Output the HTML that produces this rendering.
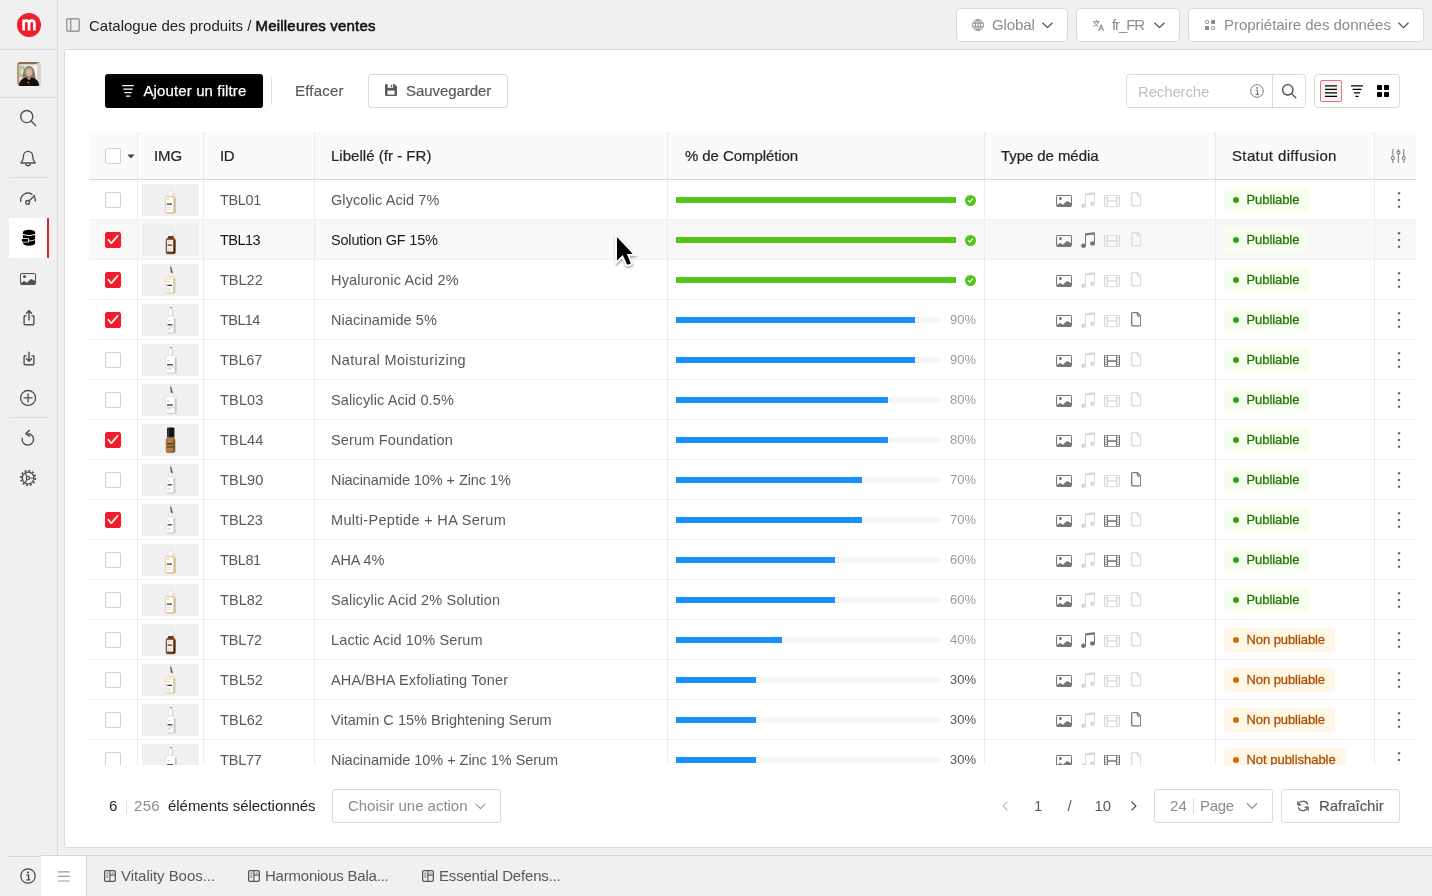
<!DOCTYPE html>
<html lang="fr">
<head>
<meta charset="utf-8">
<title>Catalogue des produits / Meilleures ventes</title>
<style>
*{box-sizing:border-box;margin:0;padding:0}
html,body{width:1432px;height:896px;overflow:hidden}
body{background:#f0f0f0;font-family:"Liberation Sans",sans-serif;font-size:15px;color:#1f1f1f;position:relative}
#root{position:absolute;left:0;top:0;width:1432px;height:896px;will-change:transform}
.abs{position:absolute}
svg{display:block}
/* sidebar */
#side{position:absolute;left:0;top:0;width:58px;height:855px;border-right:1px solid #dcdcdc}
#side .hl{position:absolute;left:0;width:57px;height:1px;background:#dcdcdc}
#side .sl{position:absolute;left:8.5px;width:40px;height:1px;background:#dcdcdc}
#logo{position:absolute;left:16.5px;top:12.800px;width:24.200px;height:24.200px;border-radius:50%;background:#f01d2c;color:#fff}
#avatar{position:absolute;left:16.5px;top:62px;width:24px;height:24px;border-radius:4px;overflow:hidden;background:#c9b49a}
.si{position:absolute;left:8px;width:40px;height:40px;color:#505050}
.si svg{position:absolute;left:50%;top:50%;transform:translate(-50%,-50%)}
.si.act{background:#fff;color:#000;border-right:2px solid #f01d2c;width:40px;left:8.5px}
/* top bar */
#crumb{position:absolute;left:89px;top:17px;height:18px;line-height:18px;font-size:15px;white-space:nowrap;color:#1f1f1f;letter-spacing:-0.01px}
#crumb b{font-weight:400;-webkit-text-stroke:.55px #111;letter-spacing:0.2px;color:#111}
.tbtn{position:absolute;top:8px;height:34px;background:#fff;border:1px solid #d9d9d9;border-radius:4px;color:#8c8c8c;font-size:15px;line-height:32px;white-space:nowrap}
.tbtn span{position:absolute;top:0}
.tbtn svg{position:absolute}
/* panel */
#panel{position:absolute;left:64px;top:49px;width:1380px;height:799px;background:#fff;border:1px solid #d9d9d9;border-radius:2.500px}
/* toolbar */
#addf{position:absolute;left:105px;top:74px;width:158px;height:34px;border-radius:3px;background:#000;color:#fff;font-size:15px;line-height:34px}
#addf span{position:absolute;left:38.500px;top:0;white-space:nowrap;letter-spacing:0.119px;-webkit-text-stroke:.25px #fff}
#vsep{position:absolute;left:271px;top:77px;width:1px;height:28px;background:#e0e0e0}
#eff{position:absolute;left:295px;top:74px;height:34px;line-height:34px;color:#595959;font-size:15px;-webkit-text-stroke:.2px #595959;letter-spacing:0.2px}
#sauv{position:absolute;left:368px;top:74px;width:140px;height:34px;border:1px solid #d9d9d9;border-radius:3px;background:#fff;color:#595959;font-size:15px;line-height:32px}
#sauv span{position:absolute;left:37px;top:0;-webkit-text-stroke:.2px #595959;letter-spacing:-0.07px}
#search{position:absolute;left:1126px;top:74px;width:180px;height:34px;border:1px solid #d9d9d9;border-radius:4px;background:#fff}
#search .ph{position:absolute;left:11px;top:0;line-height:33px;color:#bfbfbf;font-size:15px;letter-spacing:-0.15px}
#search .dv{position:absolute;left:145px;top:0;width:1px;height:32px;background:#d9d9d9}
#views{position:absolute;left:1314px;top:74px;width:86px;height:34px;border:1px solid #d9d9d9;border-radius:4px;background:#fff}
#views .sel{position:absolute;left:5px;top:5px;width:22px;height:22px;border:1px solid #f26b75;border-radius:2px;background:#f5f5f5}
/* table */
#tbl{position:absolute;left:89px;top:132px;width:1327px;height:633px;overflow:hidden;background:#fff}
#thead{position:absolute;left:0;top:0;width:1327px;height:48px;background:#fafafa;border-bottom:1px solid #d9d9d9}
.hc{position:absolute;top:0;height:47px;line-height:48px;font-size:15px;color:#262626;font-weight:400;border-left:1px solid #ececec;white-space:nowrap;-webkit-text-stroke:.22px #262626}
.row{position:absolute;left:0;width:1327px;height:40px;border-bottom:1px solid #f0f0f0;font-size:14.5px;color:#595959}
.row.hov{background:#f8f8f8;color:#1a1a1a}
.c{position:absolute;top:0;height:39px;line-height:40px;border-left:1px solid #ececec;white-space:nowrap}
.c0{left:0;width:48px;border-left:none}
.c1{left:48px;width:66px}
.c2{left:114px;width:111px;padding-left:16px}
.c3{left:225px;width:353px;padding-left:16px}
.c4{left:578px;width:317px}
.c5{left:895px;width:231px}
.c6{left:1126px;width:159px}
.c7{left:1285px;width:42px}
.cb{position:absolute;left:16px;top:12px;width:16px;height:16px;border:1px solid #d0d0d0;border-radius:2px;background:#fff}
.cb.on{background:#f01d2c;border-color:#f01d2c}
.cb.on svg{position:absolute;left:-1px;top:-1px}
.th{position:absolute;left:4px;top:4px;width:57px;height:32px;background:#f0f0f0}
.th .bt{position:absolute;left:0;top:0}
.trk{position:absolute;left:8px;top:17px;width:265px;height:6px;background:#f5f5f5}
.trk.full{width:280px}
.trk i{position:absolute;left:0;top:0;height:6px;background:#1890ff}
.trk.full i{background:#52c41a}
.ok{position:absolute;left:296.5px;top:14.5px}
.pc{position:absolute;right:8px;top:0;font-size:13px;color:#9a9a9a;line-height:40px}
.pc.dk{color:#555}
.mi{position:absolute;top:12px;color:#d9d9d9}
.mi.on{color:#757575}
.m0{left:71px;top:12.700px}.m1{left:95px;top:10.800px}.m2{left:119px;top:12.700px}.m3{left:145.900px;top:12px}
.bdg{position:absolute;left:8px;top:8px;height:24px;line-height:24px;border-radius:4px;font-size:13px;padding:0 10px 0 22.500px;font-weight:400;-webkit-text-stroke:.3px currentColor}
.bdg b{position:absolute;left:8.800px;top:8.800px;width:6.400px;height:6.400px;border-radius:50%}
.bdg.g{background:#f6ffed;color:#237804}.bdg.g b{background:#389e0d}
.bdg.o{background:#fff7e6;color:#ad4e00}.bdg.o b{background:#d46b08}
.dots{position:absolute;left:21.900px;top:11px;fill:#6a6a6a}
/* footer */
#foot{position:absolute;left:65px;top:765px;width:1367px;height:81px;background:#fff}
.ft{position:absolute;top:797px;height:18px;line-height:18px;font-size:15px;white-space:nowrap}
#act{position:absolute;left:332px;top:789px;width:169px;height:34px;border:1px solid #d9d9d9;border-radius:3px;color:#8c8c8c;font-size:15px;line-height:32px;background:#fff}
#act span{position:absolute;left:15px;top:0}
#pgsz{position:absolute;left:1154px;top:789px;width:119px;height:34px;border:1px solid #d9d9d9;border-radius:3px;color:#8c8c8c;font-size:15px;line-height:32px;background:#fff}
#refr{position:absolute;left:1281px;top:789px;width:119px;height:34px;border:1px solid #d9d9d9;border-radius:3px;color:#595959;font-size:15px;line-height:32px;background:#fff}
/* bottom bar */
#bbar{position:absolute;left:41px;top:855px;width:1391px;height:41px;background:#f0f0f0;border-top:1px solid #d9d9d9}
#burger{position:absolute;left:41px;top:856px;width:46px;height:40px;background:#fff;border-right:1px solid #d4d4d4}
.tab{position:absolute;top:867px;height:18px;line-height:18px;font-size:15px;color:#595959;white-space:nowrap}
</style>
</head>
<body>
<div id="root">
<!-- sidebar -->
<div id="side">
  <div id="logo"><svg width="24.200" height="24.200" viewBox="0 0 24.200 24.200"><path d="M6.650 17.500V6.500M6.650 10.400a2.700 2.700 0 0 1 5.400 0V17.500M12.050 10.400a2.700 2.700 0 0 1 5.400 0V17.500" fill="none" stroke="#fff" stroke-width="2.700" stroke-linecap="butt"/></svg></div>
  <div class="hl" style="top:49px"></div>
  <div id="avatar"><svg width="24" height="24" viewBox="0 0 24 24"><defs><filter id="avb" x="-10%" y="-10%" width="120%" height="120%"><feGaussianBlur stdDeviation=".55"/></filter></defs><rect width="24" height="24" fill="#ece7de"/><g filter="url(#avb)"><rect x="-2" y="-2" width="28" height="4.200" fill="#8a6f52"/><rect x="-1" y="2" width="3.500" height="24" fill="#b39c82"/><rect x="2.500" y="4" width="5" height="11" fill="#b5c486"/><rect x="3.500" y="7" width="3" height="5" fill="#dfe8b8"/><rect x="20" y="1" width="5" height="24" fill="#d9d4cf"/><rect x="17" y="3" width="3" height="12" fill="#f7f5f1"/><path d="M5.500 20C5.500 9 7.500 4 12 4C16.500 4 18.500 9 18.500 20Z" fill="#857a70"/><ellipse cx="12" cy="10" rx="3.400" ry="4.200" fill="#d9b29c"/><path d="M9 8.200C9.500 5.600 14.500 5.600 15 8.200C14 6.800 10 6.800 9 8.200Z" fill="#a9a39b"/><path d="M1.500 25C2 18 6 16 9.500 15.500L12 17.500L14.500 15.500C18 16 22 18 22.500 25Z" fill="#14110e"/><path d="M10.500 14.500h3v2.500l-1.500 1.200-1.500-1.200Z" fill="#b98a70"/><circle cx="11.300" cy="20.500" r=".7" fill="#d9b430"/><circle cx="12.800" cy="21.800" r=".6" fill="#c0392b"/></g></svg></div>
  <div class="hl" style="top:97px"></div>
  <div class="si" style="top:98px"><svg width="20" height="20" viewBox="0 0 20 20"><circle cx="8.750" cy="8.600" r="6.050" fill="none" stroke="currentColor" stroke-width="1.400"/><path d="M13.200 13.100 17.600 17.500" stroke="currentColor" stroke-width="1.400" stroke-linecap="round"/></svg></div>
  <div class="si" style="top:138px"><svg width="18" height="18" viewBox="0 0 18 18"><path d="M2 14 C4 11.600 4.500 9.600 4.500 6.900 A4.600 4.600 0 0 1 13.700 6.900 C13.700 9.600 14.200 11.600 16.200 14 Z" fill="none" stroke="currentColor" stroke-width="1.350" stroke-linejoin="round"/><path d="M6.900 14.500 A2.200 2.200 0 0 0 11.300 14.500" fill="none" stroke="currentColor" stroke-width="1.300"/></svg></div>
  <div class="sl" style="top:177px"></div>
  <div class="si" style="top:178px"><svg width="18" height="18" viewBox="0 0 18 18"><path d="M1.700 12.400A7.300 7.300 0 0 1 13 5.400M15.600 8.400A7.300 7.300 0 0 1 16.300 12" fill="none" stroke="currentColor" stroke-width="1.400" stroke-linecap="round"/><circle cx="8.600" cy="13.400" r="1.900" fill="none" stroke="currentColor" stroke-width="1.400"/><path d="M10 12 15.600 6.600" stroke="currentColor" stroke-width="1.400" stroke-linecap="round"/></svg></div>
  <div class="si act" style="top:218px"><svg style="margin-left:1px" width="16" height="18" viewBox="0 0 16 18"><path d="M1.900 3.400V14.100A6.100 2.700 0 0 0 14.100 14.100V3.400Z" fill="currentColor"/><ellipse cx="8" cy="3.400" rx="6.100" ry="2.650" fill="currentColor"/><path d="M1.300 5.400Q8 7.900 14.700 5.400" fill="none" stroke="#fff" stroke-width="1"/><path d="M8.600 11.900Q12 11.800 14.500 10.500" fill="none" stroke="#fff" stroke-width=".85"/><rect x="-1" y="9.300" width="9.200" height="4.300" rx="1.300" fill="#fff"/><rect x=".9" y="10.100" width="6.200" height="2.700" rx=".5" fill="currentColor"/></svg></div>
  <div class="si" style="top:258px"><svg style="margin-top:.6px" width="16" height="16" viewBox="0 0 16 16"><path fill="currentColor" d="M6 5.500a1.500 1.500 0 1 1-3 0 1.500 1.500 0 0 1 3 0z"/><path fill="currentColor" d="M2 2a2 2 0 0 0-2 2v8a2 2 0 0 0 2 2h12a2 2 0 0 0 2-2V4a2 2 0 0 0-2-2H2zm12 1a1 1 0 0 1 1 1v6l-3.775-1.947a.5.5 0 0 0-.577.093l-3.710 3.710-2.660-1.772a.5.5 0 0 0-.630.062L1 12V4a1 1 0 0 1 1-1h12z"/></svg></div>
  <div class="si" style="top:298px"><svg style="margin-left:1px" width="16" height="18" viewBox="0 0 16 18"><path d="M5.400 6.800H4.100a1 1 0 0 0-1 1v7a1 1 0 0 0 1 1h7.800a1 1 0 0 0 1-1v-7a1 1 0 0 0-1-1h-1.300" fill="none" stroke="currentColor" stroke-width="1.400"/><path d="M8 11V1.800M5.500 4.200 8 1.600l2.500 2.600" fill="none" stroke="currentColor" stroke-width="1.400" stroke-linecap="round" stroke-linejoin="round"/></svg></div>
  <div class="si" style="top:338px"><svg style="margin-left:1px" width="16" height="18" viewBox="0 0 16 18"><path d="M5.400 6.800H4.100a1 1 0 0 0-1 1v7a1 1 0 0 0 1 1h7.800a1 1 0 0 0 1-1v-7a1 1 0 0 0-1-1h-1.300" fill="none" stroke="currentColor" stroke-width="1.400"/><path d="M8 3.100V12.100M5.500 9.700 8 12.300l2.500-2.600" fill="none" stroke="currentColor" stroke-width="1.400" stroke-linecap="round" stroke-linejoin="round"/></svg></div>
  <div class="si" style="top:378px"><svg width="18" height="18" viewBox="0 0 18 18"><circle cx="9.100" cy="8.900" r="7.450" fill="none" stroke="currentColor" stroke-width="1.350"/><path d="M9.100 4.900v8M5.100 8.900h8" stroke="currentColor" stroke-width="1.350" stroke-linecap="round"/></svg></div>
  <div class="sl" style="top:417px"></div>
  <div class="si" style="top:418px"><svg width="18" height="18" viewBox="0 0 18 18"><path d="M8.900 4.700A5.700 5.700 0 1 1 3.250 9.400" fill="none" stroke="currentColor" stroke-width="1.400" stroke-linecap="round"/><path d="M10.400 1.400 6.700 4.600 10.400 7.300" fill="none" stroke="currentColor" stroke-width="1.400" stroke-linecap="round" stroke-linejoin="round"/></svg></div>
  <div class="si" style="top:458px"><svg width="18" height="18" viewBox="0 0 18 18"><circle cx="9.100" cy="9" r="5.800" fill="none" stroke="currentColor" stroke-width="1.300"/><circle cx="9.100" cy="9" r="7.200" fill="none" stroke="currentColor" stroke-width="1.900" stroke-dasharray="1.900 1.870"/><circle cx="8.900" cy="9" r="1.600" fill="none" stroke="currentColor" stroke-width="1.200"/><path d="M10.500 9H14.700M8.100 7.600 6 4.100M8.100 10.400 6 13.900" stroke="currentColor" stroke-width="1.200"/></svg></div>
</div>

<!-- top bar -->
<svg class="abs" style="left:66px;top:18px;color:#9a9a9a" width="14" height="14" viewBox="0 0 14 14"><rect x=".75" y=".75" width="12.500" height="12.500" rx="1.200" fill="none" stroke="currentColor" stroke-width="1.500"/><path d="M4.700 1v12" stroke="currentColor" stroke-width="1.500"/></svg>
<div id="crumb">Catalogue des produits / <b>Meilleures ventes</b></div>

<div class="tbtn" style="left:956px;width:112px">
  <svg style="left:14.700px;top:9.800px" width="12" height="12" viewBox="0 0 12 12"><circle cx="6" cy="6" r="5.400" fill="none" stroke="#8c8c8c" stroke-width="1"/><ellipse cx="6" cy="6" rx="2.500" ry="5.400" fill="none" stroke="#8c8c8c" stroke-width="1"/><path d="M.9 4.200h10.200M.9 7.800h10.200M6 .6v10.800" stroke="#8c8c8c" stroke-width="1"/></svg>
  <span style="left:35px;letter-spacing:-0.12px">Global</span>
  <svg class="chv" style="left:85px;top:12.700px" width="11" height="7" viewBox="0 0 11 7"><path d="M.8 1 5.500 5.700 10.200 1" fill="none" stroke="#4a4a4a" stroke-width="1.150" stroke-linecap="round" stroke-linejoin="round"/></svg>
</div>
<div class="tbtn" style="left:1076px;width:104px">
  <svg style="left:16px;top:10.500px" width="11" height="11" viewBox="0 0 11 11"><path d="M.5 1.700h5.800M3.400 .4v1.300M1.300 1.700c.4 2 2 3.700 4 4.400M5.400 1.700C5 3.700 3.400 5.400 .8 6.300" fill="none" stroke="#8c8c8c" stroke-width="1" stroke-linecap="round"/><path d="M5.800 10.500 8.100 5l2.300 5.500M6.600 8.700h3" fill="none" stroke="#8c8c8c" stroke-width="1.100" stroke-linecap="round" stroke-linejoin="round"/></svg>
  <span style="left:35px;letter-spacing:-1.075px">fr_FR</span>
  <svg class="chv" style="left:77px;top:12.700px" width="11" height="7" viewBox="0 0 11 7"><path d="M.8 1 5.500 5.700 10.200 1" fill="none" stroke="#4a4a4a" stroke-width="1.150" stroke-linecap="round" stroke-linejoin="round"/></svg>
</div>
<div class="tbtn" style="left:1188px;width:236px">
  <svg style="left:16px;top:11px" width="10.200" height="10.200" viewBox="0 0 10.200 10.200"><rect x=".5" y=".5" width="3" height="3" rx=".7" fill="none" stroke="#8c8c8c"/><rect x="6.100" y="0" width="4" height="4" rx=".7" fill="#8c8c8c"/><rect x="0" y="6.100" width="4" height="4" rx=".7" fill="#8c8c8c"/><rect x="6.600" y="6.600" width="3" height="3" rx=".7" fill="none" stroke="#8c8c8c"/></svg>
  <span style="left:35px;letter-spacing:-0.03px">Propriétaire des données</span>
  <svg class="chv" style="left:209px;top:12.700px" width="11" height="7" viewBox="0 0 11 7"><path d="M.8 1 5.500 5.700 10.200 1" fill="none" stroke="#4a4a4a" stroke-width="1.150" stroke-linecap="round" stroke-linejoin="round"/></svg>
</div>

<!-- panel -->
<div id="panel"></div>

<!-- toolbar -->
<div id="addf">
  <svg class="abs" style="left:17px;top:10.600px" width="12" height="12" viewBox="0 0 12 12"><path d="M.6 .7h10.800M1.700 4.100h8.600M3 7.700h6.100M4.400 11.200h3.400" stroke="#fff" stroke-width="1.250" stroke-linecap="round"/></svg>
  <span>Ajouter un filtre</span>
</div>
<div id="vsep"></div>
<div id="eff">Effacer</div>
<div id="sauv">
  <svg class="abs" style="left:16px;top:9.400px" width="12" height="12" viewBox="0 0 12 12"><path d="M0 1.200A1.200 1.200 0 0 1 1.200 0H9.400L12 2.600v8.200A1.200 1.200 0 0 1 10.800 12H1.200A1.200 1.200 0 0 1 0 10.800Z" fill="#5a5a5a"/><rect x="2.600" y="0" width="5.600" height="3.800" fill="#fff"/><rect x="5.800" y=".8" width="1.400" height="2.200" fill="#5a5a5a"/><rect x="2.400" y="6.600" width="7.200" height="4" fill="#fff"/></svg>
  <span>Sauvegarder</span>
</div>
<div id="search">
  <span class="ph">Recherche</span>
  <svg class="abs" style="left:123px;top:9px" width="14" height="14" viewBox="0 0 14 14"><circle cx="7" cy="7" r="6.300" fill="none" stroke="#7a7a7a" stroke-width="1"/><circle cx="7" cy="3.900" r=".9" fill="#7a7a7a"/><path d="M5.600 6.200H7.500V10.400M5.600 10.400H9" fill="none" stroke="#7a7a7a" stroke-width="1.100"/></svg>
  <span class="dv"></span>
  <svg class="abs" style="left:154px;top:8px" width="16" height="16" viewBox="0 0 16 16"><circle cx="6.800" cy="6.800" r="5.200" fill="none" stroke="#434343" stroke-width="1.300"/><path d="M10.600 10.600 14.800 14.800" stroke="#434343" stroke-width="1.300" stroke-linecap="round"/></svg>
</div>
<div id="views">
  <span class="sel"></span>
  <svg class="abs" style="left:10px;top:10px" width="12" height="12" viewBox="0 0 12 12"><path d="M0 .8h12M0 4.300h12M0 7.800h12M0 11.300h12" stroke="#000" stroke-width="1.300"/></svg>
  <svg class="abs" style="left:36px;top:10px" width="12" height="12" viewBox="0 0 12 12"><path d="M0 .8h12M1.500 4.300h9M3 7.800h6M4.400 11.300h3.200" stroke="#000" stroke-width="1.300"/></svg>
  <svg class="abs" style="left:62px;top:10px" width="12" height="12" viewBox="0 0 12 12"><rect x="0" y="0" width="5" height="5" rx=".7" fill="#000"/><rect x="7" y="0" width="5" height="5" rx=".7" fill="#000"/><rect x="0" y="7" width="5" height="5" rx=".7" fill="#000"/><rect x="7" y="7" width="5" height="5" rx=".7" fill="#000"/></svg>
</div>

<!-- table -->
<div id="tbl">
  <div id="thead">
    <div class="hc" style="left:0;width:48px;border-left:none"><span class="cb" style="top:16px"></span><svg class="abs" style="left:38px;top:21.500px" width="8" height="5" viewBox="0 0 8 5"><path d="M.4 .4h7.200L4 4.600Z" fill="#434343"/></svg></div>
    <div class="hc" style="left:48px;width:66px;padding-left:16px;letter-spacing:-0.1px">IMG</div>
    <div class="hc" style="left:114px;width:111px;padding-left:16px;letter-spacing:-0.3px">ID</div>
    <div class="hc" style="left:225px;width:353px;padding-left:16px;letter-spacing:0.025px">Libellé (fr - FR)</div>
    <div class="hc" style="left:578px;width:317px;padding-left:17px;letter-spacing:-0.079px">% de Complétion</div>
    <div class="hc" style="left:895px;width:231px;padding-left:16px;letter-spacing:-0.075px">Type de média</div>
    <div class="hc" style="left:1126px;width:160px;padding-left:16px;letter-spacing:0.367px">Statut diffusion</div>
    <div class="hc" style="left:1285px;width:42px"><svg class="abs" style="left:16px;top:17px" width="15" height="14" viewBox="0 0 15 14"><path d="M1.900 0v14M7.400 0v14M12.800 0v14" stroke="#808080" stroke-width="1.100"/><circle cx="1.900" cy="9" r="1.500" fill="#fafafa" stroke="#808080" stroke-width="1.100"/><circle cx="7.400" cy="3.600" r="1.500" fill="#fafafa" stroke="#808080" stroke-width="1.100"/><circle cx="12.800" cy="9" r="1.500" fill="#fafafa" stroke="#808080" stroke-width="1.100"/></svg></div>
  </div>
<div class="row" style="top:48px"><div class="c c0"><span class="cb"></span></div><div class="c c1"><span class="th"><svg class="bt" width="57" height="32" viewBox="0 0 57 32"><path d="M27.9 7.5 L28.3 3.6 Q28.7 3 29.1 3.6 L29.9 7.5Z" fill="#e9e9e9" stroke="#cfcfcf" stroke-width=".3"/><path d="M26 12.4 V9 Q26 6.6 28.9 6.6 Q31.8 6.600 31.8 9 V12.4Z" fill="#fbfbfb" stroke="#d0d0d0" stroke-width=".4"/><rect x="30.4" y="7.6" width="1.2" height="4.8" fill="#d9d9d9" opacity=".8"/><path d="M23.1 14.6 Q23.1 12.0 25.5 12.0 H31.1 Q33.5 12.0 33.5 14.6 V28.0 Q33.5 29.6 31.9 29.6 H24.7 Q23.1 29.6 23.1 28.0 Z" fill="#f3dfba" stroke="#dcc39a" stroke-width=".5"/><rect x="31.2" y="14.0" width="2.200" height="15.0" rx=".8" fill="#c9ad80" opacity=".75"/><rect x="24.1" y="28.5" width="8.4" height="1" rx=".5" fill="#c9ad80" opacity=".6"/><rect x="24.1" y="13.8" width="7.3" height="14.2" fill="#fff" opacity="0.92"/><rect x="24.7" y="19.5" width="5.3" height="1.300" fill="#3d3d3d"/><rect x="25.0" y="15.4" width="2" height=".5" fill="#999"/><rect x="24.8" y="23.6" width="4.0" height=".5" fill="#b5b5b5"/><rect x="24.8" y="25.0" width="3.3" height=".5" fill="#c8c8c8"/></svg></span></div><div class="c c2" style="letter-spacing:-0.35px">TBL01</div><div class="c c3" style="letter-spacing:0.08px">Glycolic Acid 7%</div><div class="c c4"><span class="trk full"><i style="width:100%"></i></span><svg class="ok" width="11" height="11" viewBox="0 0 11 11"><circle cx="5.500" cy="5.500" r="5.500" fill="#52c41a"/><path d="M3.300 5.700 4.800 7.100 7.700 4" fill="none" stroke="#fff" stroke-width="1.100" stroke-linecap="round" stroke-linejoin="round"/></svg></div><div class="c c5"><svg class="mi on m0" width="16" height="16" viewBox="0 0 16 16"><path fill="currentColor" d="M6 5.500a1.500 1.500 0 1 1-3 0 1.500 1.500 0 0 1 3 0z"/><path fill="currentColor" d="M2 2a2 2 0 0 0-2 2v8a2 2 0 0 0 2 2h12a2 2 0 0 0 2-2V4a2 2 0 0 0-2-2H2zm12 1a1 1 0 0 1 1 1v6l-3.775-1.947a.5.5 0 0 0-.577.093l-3.710 3.710-2.660-1.772a.5.5 0 0 0-.630.062L1 12V4a1 1 0 0 1 1-1h12z"/></svg><svg class="mi m1" width="16" height="18" viewBox="0 0 16 16" preserveAspectRatio="none"><path fill="currentColor" d="M6 13c0 1.105-1.120 2-2.500 2S1 14.105 1 13c0-1.104 1.120-2 2.500-2s2.500.896 2.500 2zm9-2c0 1.105-1.120 2-2.500 2s-2.500-.895-2.500-2 1.120-2 2.500-2 2.500.895 2.500 2z"/><path fill="currentColor" fill-rule="evenodd" d="M14 11V2h1v9h-1zM6 3v10H5V3h1z"/><path fill="currentColor" d="M5 2.905a1 1 0 0 1 .9-.995l8-.8a1 1 0 0 1 1.100.995V3L5 4V2.905z"/></svg><svg class="mi m2" width="16" height="16" viewBox="0 0 16 16"><path fill="currentColor" d="M0 1a1 1 0 0 1 1-1h14a1 1 0 0 1 1 1v14a1 1 0 0 1-1 1H1a1 1 0 0 1-1-1V1zm4 0v6h8V1H4zm8 8H4v6h8V9zM1 1v2h2V1H1zm2 3H1v2h2V4zM1 7v2h2V7H1zm2 3H1v2h2v-2zm-2 3v2h2v-2H1zM15 1h-2v2h2V1zm-2 3v2h2V4h-2zm2 3h-2v2h2V7zm-2 3v2h2v-2h-2zm2 3h-2v2h2v-2z" transform="translate(0 2) scale(1 .75)"/></svg><svg class="mi m3" width="10.500" height="14.600" viewBox="0 0 10.500 14.600"><path d="M2 .7H6.500L9.800 4V12.700Q9.800 13.900 8.600 13.900H1.900Q.7 13.900 .7 12.700V1.900Q.7 .7 1.900 .7Z" fill="none" stroke="currentColor" stroke-width="1.300" stroke-linejoin="round"/><path d="M6.300 .9V3.100Q6.300 4.200 7.400 4.200H9.600" fill="none" stroke="currentColor" stroke-width="1.100"/></svg></div><div class="c c6"><span class="bdg g"><b></b><span style="letter-spacing:-0.075px">Publiable</span></span></div><div class="c c7"><svg class="dots" width="4" height="18" viewBox="0 0 4 18"><circle cx="2" cy="2.300" r="1.250"/><circle cx="2" cy="9" r="1.250"/><circle cx="2" cy="15.700" r="1.250"/></svg></div></div>
<div class="row hov" style="top:88px"><div class="c c0"><span class="cb on"><svg width="16" height="16" viewBox="0 0 16 16"><path d="M3.400 7.900 6.300 11.200 12.600 3.900" fill="none" stroke="#fff" stroke-width="1.650" stroke-linecap="round" stroke-linejoin="round"/></svg></span></div><div class="c c1"><span class="th"><svg class="bt" width="57" height="32" viewBox="0 0 57 32"><path d="M27.9 7.5 L28.3 3.6 Q28.7 3 29.1 3.6 L29.9 7.5Z" fill="#e9e9e9" stroke="#cfcfcf" stroke-width=".3"/><path d="M26 12.4 V9 Q26 6.6 28.9 6.6 Q31.8 6.600 31.8 9 V12.4Z" fill="#fbfbfb" stroke="#d0d0d0" stroke-width=".4"/><rect x="30.4" y="7.6" width="1.2" height="4.8" fill="#d9d9d9" opacity=".8"/><rect x="26.2" y="12" width="5.4" height="3" fill="#6e3514"/><path d="M24.1 16.6 Q24.1 14.0 26.5 14.0 H30.9 Q33.3 14.0 33.3 16.6 V28.2 Q33.3 29.8 31.7 29.8 H25.7 Q24.1 29.8 24.1 28.2 Z" fill="#7c3d17" stroke="#5a2a0e" stroke-width=".5"/><rect x="31.0" y="16.0" width="2.200" height="13.2" rx=".8" fill="#3f1c08" opacity=".75"/><rect x="25.1" y="28.7" width="7.2" height="1" rx=".5" fill="#3f1c08" opacity=".6"/><rect x="24.9" y="15.8" width="6.4" height="11.8" fill="#fff" opacity="0.92"/><rect x="25.5" y="20.5" width="4.6" height="1.300" fill="#3d3d3d"/><rect x="25.8" y="17.4" width="2" height=".5" fill="#999"/><rect x="25.6" y="24.6" width="3.5" height=".5" fill="#b5b5b5"/><rect x="25.6" y="26.0" width="2.9" height=".5" fill="#c8c8c8"/></svg></span></div><div class="c c2" style="letter-spacing:-0.525px">TBL13</div><div class="c c3" style="letter-spacing:-0.186px">Solution GF 15%</div><div class="c c4"><span class="trk full"><i style="width:100%"></i></span><svg class="ok" width="11" height="11" viewBox="0 0 11 11"><circle cx="5.500" cy="5.500" r="5.500" fill="#52c41a"/><path d="M3.300 5.700 4.800 7.100 7.700 4" fill="none" stroke="#fff" stroke-width="1.100" stroke-linecap="round" stroke-linejoin="round"/></svg></div><div class="c c5"><svg class="mi on m0" width="16" height="16" viewBox="0 0 16 16"><path fill="currentColor" d="M6 5.500a1.500 1.500 0 1 1-3 0 1.500 1.500 0 0 1 3 0z"/><path fill="currentColor" d="M2 2a2 2 0 0 0-2 2v8a2 2 0 0 0 2 2h12a2 2 0 0 0 2-2V4a2 2 0 0 0-2-2H2zm12 1a1 1 0 0 1 1 1v6l-3.775-1.947a.5.5 0 0 0-.577.093l-3.710 3.710-2.660-1.772a.5.5 0 0 0-.630.062L1 12V4a1 1 0 0 1 1-1h12z"/></svg><svg class="mi on m1" width="16" height="18" viewBox="0 0 16 16" preserveAspectRatio="none"><path fill="currentColor" d="M6 13c0 1.105-1.120 2-2.500 2S1 14.105 1 13c0-1.104 1.120-2 2.500-2s2.500.896 2.500 2zm9-2c0 1.105-1.120 2-2.500 2s-2.500-.895-2.500-2 1.120-2 2.500-2 2.500.895 2.500 2z"/><path fill="currentColor" fill-rule="evenodd" d="M14 11V2h1v9h-1zM6 3v10H5V3h1z"/><path fill="currentColor" d="M5 2.905a1 1 0 0 1 .9-.995l8-.8a1 1 0 0 1 1.100.995V3L5 4V2.905z"/></svg><svg class="mi m2" width="16" height="16" viewBox="0 0 16 16"><path fill="currentColor" d="M0 1a1 1 0 0 1 1-1h14a1 1 0 0 1 1 1v14a1 1 0 0 1-1 1H1a1 1 0 0 1-1-1V1zm4 0v6h8V1H4zm8 8H4v6h8V9zM1 1v2h2V1H1zm2 3H1v2h2V4zM1 7v2h2V7H1zm2 3H1v2h2v-2zm-2 3v2h2v-2H1zM15 1h-2v2h2V1zm-2 3v2h2V4h-2zm2 3h-2v2h2V7zm-2 3v2h2v-2h-2zm2 3h-2v2h2v-2z" transform="translate(0 2) scale(1 .75)"/></svg><svg class="mi m3" width="10.500" height="14.600" viewBox="0 0 10.500 14.600"><path d="M2 .7H6.500L9.800 4V12.700Q9.800 13.900 8.600 13.900H1.900Q.7 13.900 .7 12.700V1.900Q.7 .7 1.900 .7Z" fill="none" stroke="currentColor" stroke-width="1.300" stroke-linejoin="round"/><path d="M6.300 .9V3.100Q6.300 4.200 7.400 4.200H9.600" fill="none" stroke="currentColor" stroke-width="1.100"/></svg></div><div class="c c6"><span class="bdg g"><b></b><span style="letter-spacing:-0.075px">Publiable</span></span></div><div class="c c7"><svg class="dots" width="4" height="18" viewBox="0 0 4 18"><circle cx="2" cy="2.300" r="1.250"/><circle cx="2" cy="9" r="1.250"/><circle cx="2" cy="15.700" r="1.250"/></svg></div></div>
<div class="row" style="top:128px"><div class="c c0"><span class="cb on"><svg width="16" height="16" viewBox="0 0 16 16"><path d="M3.400 7.900 6.300 11.200 12.600 3.900" fill="none" stroke="#fff" stroke-width="1.650" stroke-linecap="round" stroke-linejoin="round"/></svg></span></div><div class="c c1"><span class="th"><svg class="bt" width="57" height="32" viewBox="0 0 57 32"><path d="M28.300 2.600 L29.300 2.600 L31.400 9.400 L29 9.900 Z" fill="#9a9a9a"/><path d="M28.400 2.600 L29 2.600 L30.300 9.600 L29.100 9.800Z" fill="#4f4f4f"/><path d="M26.6 12.6 V10.6 Q26.6 8.8 28.9 8.8 Q31.2 8.8 31.2 10.6 V12.6Z" fill="#f6f6f6" stroke="#cfcfcf" stroke-width=".4"/><path d="M23.8 14.8 Q23.8 12.2 26.2 12.2 H30.8 Q33.2 12.2 33.2 14.8 V28.0 Q33.2 29.6 31.6 29.6 H25.4 Q23.8 29.6 23.8 28.0 Z" fill="#f3eed6" stroke="#d9d2b4" stroke-width=".5"/><rect x="30.9" y="14.2" width="2.200" height="14.8" rx=".8" fill="#c7bf9c" opacity=".75"/><rect x="24.8" y="28.5" width="7.4" height="1" rx=".5" fill="#c7bf9c" opacity=".6"/><rect x="24.6" y="16.0" width="6.6" height="12.0" fill="#fff" opacity="0.8"/><rect x="25.2" y="20.7" width="4.8" height="1.300" fill="#3d3d3d"/><rect x="25.5" y="17.6" width="2" height=".5" fill="#999"/><rect x="25.3" y="24.8" width="3.6" height=".5" fill="#b5b5b5"/><rect x="25.3" y="26.2" width="3.0" height=".5" fill="#c8c8c8"/></svg></span></div><div class="c c2" style="letter-spacing:0.0px">TBL22</div><div class="c c3" style="letter-spacing:0.159px">Hyaluronic Acid 2%</div><div class="c c4"><span class="trk full"><i style="width:100%"></i></span><svg class="ok" width="11" height="11" viewBox="0 0 11 11"><circle cx="5.500" cy="5.500" r="5.500" fill="#52c41a"/><path d="M3.300 5.700 4.800 7.100 7.700 4" fill="none" stroke="#fff" stroke-width="1.100" stroke-linecap="round" stroke-linejoin="round"/></svg></div><div class="c c5"><svg class="mi on m0" width="16" height="16" viewBox="0 0 16 16"><path fill="currentColor" d="M6 5.500a1.500 1.500 0 1 1-3 0 1.500 1.500 0 0 1 3 0z"/><path fill="currentColor" d="M2 2a2 2 0 0 0-2 2v8a2 2 0 0 0 2 2h12a2 2 0 0 0 2-2V4a2 2 0 0 0-2-2H2zm12 1a1 1 0 0 1 1 1v6l-3.775-1.947a.5.5 0 0 0-.577.093l-3.710 3.710-2.660-1.772a.5.5 0 0 0-.630.062L1 12V4a1 1 0 0 1 1-1h12z"/></svg><svg class="mi m1" width="16" height="18" viewBox="0 0 16 16" preserveAspectRatio="none"><path fill="currentColor" d="M6 13c0 1.105-1.120 2-2.500 2S1 14.105 1 13c0-1.104 1.120-2 2.500-2s2.500.896 2.500 2zm9-2c0 1.105-1.120 2-2.500 2s-2.500-.895-2.500-2 1.120-2 2.500-2 2.500.895 2.500 2z"/><path fill="currentColor" fill-rule="evenodd" d="M14 11V2h1v9h-1zM6 3v10H5V3h1z"/><path fill="currentColor" d="M5 2.905a1 1 0 0 1 .9-.995l8-.8a1 1 0 0 1 1.100.995V3L5 4V2.905z"/></svg><svg class="mi m2" width="16" height="16" viewBox="0 0 16 16"><path fill="currentColor" d="M0 1a1 1 0 0 1 1-1h14a1 1 0 0 1 1 1v14a1 1 0 0 1-1 1H1a1 1 0 0 1-1-1V1zm4 0v6h8V1H4zm8 8H4v6h8V9zM1 1v2h2V1H1zm2 3H1v2h2V4zM1 7v2h2V7H1zm2 3H1v2h2v-2zm-2 3v2h2v-2H1zM15 1h-2v2h2V1zm-2 3v2h2V4h-2zm2 3h-2v2h2V7zm-2 3v2h2v-2h-2zm2 3h-2v2h2v-2z" transform="translate(0 2) scale(1 .75)"/></svg><svg class="mi m3" width="10.500" height="14.600" viewBox="0 0 10.500 14.600"><path d="M2 .7H6.500L9.800 4V12.700Q9.800 13.900 8.600 13.900H1.900Q.7 13.900 .7 12.700V1.900Q.7 .7 1.900 .7Z" fill="none" stroke="currentColor" stroke-width="1.300" stroke-linejoin="round"/><path d="M6.300 .9V3.100Q6.300 4.200 7.400 4.200H9.600" fill="none" stroke="currentColor" stroke-width="1.100"/></svg></div><div class="c c6"><span class="bdg g"><b></b><span style="letter-spacing:-0.075px">Publiable</span></span></div><div class="c c7"><svg class="dots" width="4" height="18" viewBox="0 0 4 18"><circle cx="2" cy="2.300" r="1.250"/><circle cx="2" cy="9" r="1.250"/><circle cx="2" cy="15.700" r="1.250"/></svg></div></div>
<div class="row" style="top:168px"><div class="c c0"><span class="cb on"><svg width="16" height="16" viewBox="0 0 16 16"><path d="M3.400 7.900 6.300 11.200 12.600 3.900" fill="none" stroke="#fff" stroke-width="1.650" stroke-linecap="round" stroke-linejoin="round"/></svg></span></div><div class="c c1"><span class="th"><svg class="bt" width="57" height="32" viewBox="0 0 57 32"><path d="M26.6 12.5 V6 Q26.6 3.2 28.4 3.200 Q31 3.2 31.2 6 V12.5Z" fill="#fafafa" stroke="#d2d2d2" stroke-width=".4"/><rect x="29.800" y="4.4" width="1.3" height="8" fill="#cfcfcf" opacity=".8"/><rect x="28.200" y="2.9" width="1.8" height="1.5" fill="#9a9a9a"/><path d="M24.4 14.8 Q24.4 12.2 26.8 12.2 H31.1 Q33.5 12.2 33.5 14.8 V27.8 Q33.5 29.4 31.9 29.4 H26.0 Q24.4 29.4 24.4 27.8 Z" fill="#fcfcfc" stroke="#d2d2d2" stroke-width=".5"/><rect x="31.2" y="14.2" width="2.200" height="14.6" rx=".8" fill="#b9b9b9" opacity=".75"/><rect x="25.4" y="28.3" width="7.1" height="1" rx=".5" fill="#b9b9b9" opacity=".6"/><rect x="25.0" y="14.8" width="6.6" height="13.4" fill="#fff" opacity="0.92"/><rect x="25.6" y="20.1" width="4.8" height="1.300" fill="#3d3d3d"/><rect x="25.9" y="16.4" width="2" height=".5" fill="#999"/><rect x="25.0" y="22.6" width="6.6" height=".7" fill="#9fd0ea"/><rect x="25.7" y="24.2" width="3.6" height=".5" fill="#b5b5b5"/><rect x="25.7" y="25.6" width="3.0" height=".5" fill="#c8c8c8"/></svg></span></div><div class="c c2" style="letter-spacing:-0.575px">TBL14</div><div class="c c3" style="letter-spacing:0.085px">Niacinamide 5%</div><div class="c c4"><span class="trk"><i style="width:90%"></i></span><span class="pc">90%</span></div><div class="c c5"><svg class="mi on m0" width="16" height="16" viewBox="0 0 16 16"><path fill="currentColor" d="M6 5.500a1.500 1.500 0 1 1-3 0 1.500 1.500 0 0 1 3 0z"/><path fill="currentColor" d="M2 2a2 2 0 0 0-2 2v8a2 2 0 0 0 2 2h12a2 2 0 0 0 2-2V4a2 2 0 0 0-2-2H2zm12 1a1 1 0 0 1 1 1v6l-3.775-1.947a.5.5 0 0 0-.577.093l-3.710 3.710-2.660-1.772a.5.5 0 0 0-.630.062L1 12V4a1 1 0 0 1 1-1h12z"/></svg><svg class="mi m1" width="16" height="18" viewBox="0 0 16 16" preserveAspectRatio="none"><path fill="currentColor" d="M6 13c0 1.105-1.120 2-2.500 2S1 14.105 1 13c0-1.104 1.120-2 2.500-2s2.500.896 2.500 2zm9-2c0 1.105-1.120 2-2.500 2s-2.500-.895-2.500-2 1.120-2 2.500-2 2.500.895 2.500 2z"/><path fill="currentColor" fill-rule="evenodd" d="M14 11V2h1v9h-1zM6 3v10H5V3h1z"/><path fill="currentColor" d="M5 2.905a1 1 0 0 1 .9-.995l8-.8a1 1 0 0 1 1.100.995V3L5 4V2.905z"/></svg><svg class="mi m2" width="16" height="16" viewBox="0 0 16 16"><path fill="currentColor" d="M0 1a1 1 0 0 1 1-1h14a1 1 0 0 1 1 1v14a1 1 0 0 1-1 1H1a1 1 0 0 1-1-1V1zm4 0v6h8V1H4zm8 8H4v6h8V9zM1 1v2h2V1H1zm2 3H1v2h2V4zM1 7v2h2V7H1zm2 3H1v2h2v-2zm-2 3v2h2v-2H1zM15 1h-2v2h2V1zm-2 3v2h2V4h-2zm2 3h-2v2h2V7zm-2 3v2h2v-2h-2zm2 3h-2v2h2v-2z" transform="translate(0 2) scale(1 .75)"/></svg><svg class="mi on m3" width="10.500" height="14.600" viewBox="0 0 10.500 14.600"><path d="M2 .7H6.500L9.800 4V12.700Q9.800 13.900 8.600 13.900H1.900Q.7 13.900 .7 12.700V1.900Q.7 .7 1.900 .7Z" fill="none" stroke="currentColor" stroke-width="1.300" stroke-linejoin="round"/><path d="M6.300 .9V3.100Q6.300 4.200 7.400 4.200H9.600" fill="none" stroke="currentColor" stroke-width="1.100"/></svg></div><div class="c c6"><span class="bdg g"><b></b><span style="letter-spacing:-0.075px">Publiable</span></span></div><div class="c c7"><svg class="dots" width="4" height="18" viewBox="0 0 4 18"><circle cx="2" cy="2.300" r="1.250"/><circle cx="2" cy="9" r="1.250"/><circle cx="2" cy="15.700" r="1.250"/></svg></div></div>
<div class="row" style="top:208px"><div class="c c0"><span class="cb"></span></div><div class="c c1"><span class="th"><svg class="bt" width="57" height="32" viewBox="0 0 57 32"><path d="M26.6 12.5 V6 Q26.6 3.2 28.4 3.200 Q31 3.2 31.2 6 V12.5Z" fill="#fafafa" stroke="#d2d2d2" stroke-width=".4"/><rect x="29.800" y="4.4" width="1.3" height="8" fill="#cfcfcf" opacity=".8"/><rect x="28.200" y="2.9" width="1.8" height="1.5" fill="#9a9a9a"/><path d="M23.8 14.0 Q23.8 11.4 26.2 11.4 H32.2 Q34.6 11.4 34.6 14.0 V27.8 Q34.6 29.4 33.0 29.4 H25.4 Q23.8 29.4 23.8 27.8 Z" fill="#fcfcfc" stroke="#d2d2d2" stroke-width=".5"/><rect x="32.3" y="13.4" width="2.200" height="15.4" rx=".8" fill="#b9b9b9" opacity=".75"/><rect x="24.8" y="28.3" width="8.8" height="1" rx=".5" fill="#b9b9b9" opacity=".6"/><rect x="24.5" y="14.8" width="8.1" height="13.4" fill="#fff" opacity="0.92"/><rect x="25.1" y="20.1" width="5.8" height="1.300" fill="#3d3d3d"/><rect x="25.4" y="16.4" width="2" height=".5" fill="#999"/><rect x="24.5" y="22.6" width="8.1" height=".7" fill="#9fd0ea"/><rect x="25.2" y="24.2" width="4.5" height=".5" fill="#b5b5b5"/><rect x="25.2" y="25.6" width="3.6" height=".5" fill="#c8c8c8"/></svg></span></div><div class="c c2" style="letter-spacing:-0.075px">TBL67</div><div class="c c3" style="letter-spacing:0.342px">Natural Moisturizing</div><div class="c c4"><span class="trk"><i style="width:90%"></i></span><span class="pc">90%</span></div><div class="c c5"><svg class="mi on m0" width="16" height="16" viewBox="0 0 16 16"><path fill="currentColor" d="M6 5.500a1.500 1.500 0 1 1-3 0 1.500 1.500 0 0 1 3 0z"/><path fill="currentColor" d="M2 2a2 2 0 0 0-2 2v8a2 2 0 0 0 2 2h12a2 2 0 0 0 2-2V4a2 2 0 0 0-2-2H2zm12 1a1 1 0 0 1 1 1v6l-3.775-1.947a.5.5 0 0 0-.577.093l-3.710 3.710-2.660-1.772a.5.5 0 0 0-.630.062L1 12V4a1 1 0 0 1 1-1h12z"/></svg><svg class="mi m1" width="16" height="18" viewBox="0 0 16 16" preserveAspectRatio="none"><path fill="currentColor" d="M6 13c0 1.105-1.120 2-2.500 2S1 14.105 1 13c0-1.104 1.120-2 2.500-2s2.500.896 2.500 2zm9-2c0 1.105-1.120 2-2.500 2s-2.500-.895-2.500-2 1.120-2 2.500-2 2.500.895 2.500 2z"/><path fill="currentColor" fill-rule="evenodd" d="M14 11V2h1v9h-1zM6 3v10H5V3h1z"/><path fill="currentColor" d="M5 2.905a1 1 0 0 1 .9-.995l8-.8a1 1 0 0 1 1.100.995V3L5 4V2.905z"/></svg><svg class="mi on m2" width="16" height="16" viewBox="0 0 16 16"><path fill="currentColor" d="M0 1a1 1 0 0 1 1-1h14a1 1 0 0 1 1 1v14a1 1 0 0 1-1 1H1a1 1 0 0 1-1-1V1zm4 0v6h8V1H4zm8 8H4v6h8V9zM1 1v2h2V1H1zm2 3H1v2h2V4zM1 7v2h2V7H1zm2 3H1v2h2v-2zm-2 3v2h2v-2H1zM15 1h-2v2h2V1zm-2 3v2h2V4h-2zm2 3h-2v2h2V7zm-2 3v2h2v-2h-2zm2 3h-2v2h2v-2z" transform="translate(0 2) scale(1 .75)"/></svg><svg class="mi m3" width="10.500" height="14.600" viewBox="0 0 10.500 14.600"><path d="M2 .7H6.500L9.800 4V12.700Q9.800 13.900 8.600 13.900H1.900Q.7 13.900 .7 12.700V1.900Q.7 .7 1.900 .7Z" fill="none" stroke="currentColor" stroke-width="1.300" stroke-linejoin="round"/><path d="M6.300 .9V3.100Q6.300 4.200 7.400 4.200H9.600" fill="none" stroke="currentColor" stroke-width="1.100"/></svg></div><div class="c c6"><span class="bdg g"><b></b><span style="letter-spacing:-0.075px">Publiable</span></span></div><div class="c c7"><svg class="dots" width="4" height="18" viewBox="0 0 4 18"><circle cx="2" cy="2.300" r="1.250"/><circle cx="2" cy="9" r="1.250"/><circle cx="2" cy="15.700" r="1.250"/></svg></div></div>
<div class="row" style="top:248px"><div class="c c0"><span class="cb"></span></div><div class="c c1"><span class="th"><svg class="bt" width="57" height="32" viewBox="0 0 57 32"><path d="M28.300 2.600 L29.300 2.600 L31.400 9.400 L29 9.900 Z" fill="#9a9a9a"/><path d="M28.400 2.600 L29 2.600 L30.300 9.600 L29.100 9.800Z" fill="#4f4f4f"/><path d="M26.6 12.6 V10.6 Q26.6 8.8 28.9 8.8 Q31.2 8.8 31.2 10.6 V12.6Z" fill="#f6f6f6" stroke="#cfcfcf" stroke-width=".4"/><path d="M23.6 14.8 Q23.6 12.2 26.0 12.2 H32.2 Q34.6 12.2 34.6 14.8 V28.0 Q34.6 29.6 33.0 29.6 H25.2 Q23.6 29.6 23.6 28.0 Z" fill="#fcfcfc" stroke="#d2d2d2" stroke-width=".5"/><rect x="32.3" y="14.2" width="2.200" height="14.8" rx=".8" fill="#b9b9b9" opacity=".75"/><rect x="24.6" y="28.5" width="9.0" height="1" rx=".5" fill="#b9b9b9" opacity=".6"/><rect x="24.4" y="15.2" width="8.2" height="13.2" fill="#fff" opacity="0.92"/><rect x="25.0" y="20.4" width="5.9" height="1.300" fill="#3d3d3d"/><rect x="25.3" y="16.8" width="2" height=".5" fill="#999"/><rect x="24.4" y="22.9" width="8.2" height=".7" fill="#9fd0ea"/><rect x="25.1" y="24.5" width="4.5" height=".5" fill="#b5b5b5"/><rect x="25.1" y="25.9" width="3.7" height=".5" fill="#c8c8c8"/></svg></span></div><div class="c c2" style="letter-spacing:0.175px">TBL03</div><div class="c c3" style="letter-spacing:0.106px">Salicylic Acid 0.5%</div><div class="c c4"><span class="trk"><i style="width:80%"></i></span><span class="pc">80%</span></div><div class="c c5"><svg class="mi on m0" width="16" height="16" viewBox="0 0 16 16"><path fill="currentColor" d="M6 5.500a1.500 1.500 0 1 1-3 0 1.500 1.500 0 0 1 3 0z"/><path fill="currentColor" d="M2 2a2 2 0 0 0-2 2v8a2 2 0 0 0 2 2h12a2 2 0 0 0 2-2V4a2 2 0 0 0-2-2H2zm12 1a1 1 0 0 1 1 1v6l-3.775-1.947a.5.5 0 0 0-.577.093l-3.710 3.710-2.660-1.772a.5.5 0 0 0-.630.062L1 12V4a1 1 0 0 1 1-1h12z"/></svg><svg class="mi m1" width="16" height="18" viewBox="0 0 16 16" preserveAspectRatio="none"><path fill="currentColor" d="M6 13c0 1.105-1.120 2-2.500 2S1 14.105 1 13c0-1.104 1.120-2 2.500-2s2.500.896 2.500 2zm9-2c0 1.105-1.120 2-2.500 2s-2.500-.895-2.500-2 1.120-2 2.500-2 2.500.895 2.500 2z"/><path fill="currentColor" fill-rule="evenodd" d="M14 11V2h1v9h-1zM6 3v10H5V3h1z"/><path fill="currentColor" d="M5 2.905a1 1 0 0 1 .9-.995l8-.8a1 1 0 0 1 1.100.995V3L5 4V2.905z"/></svg><svg class="mi m2" width="16" height="16" viewBox="0 0 16 16"><path fill="currentColor" d="M0 1a1 1 0 0 1 1-1h14a1 1 0 0 1 1 1v14a1 1 0 0 1-1 1H1a1 1 0 0 1-1-1V1zm4 0v6h8V1H4zm8 8H4v6h8V9zM1 1v2h2V1H1zm2 3H1v2h2V4zM1 7v2h2V7H1zm2 3H1v2h2v-2zm-2 3v2h2v-2H1zM15 1h-2v2h2V1zm-2 3v2h2V4h-2zm2 3h-2v2h2V7zm-2 3v2h2v-2h-2zm2 3h-2v2h2v-2z" transform="translate(0 2) scale(1 .75)"/></svg><svg class="mi m3" width="10.500" height="14.600" viewBox="0 0 10.500 14.600"><path d="M2 .7H6.500L9.800 4V12.700Q9.800 13.900 8.600 13.900H1.900Q.7 13.900 .7 12.700V1.900Q.7 .7 1.900 .7Z" fill="none" stroke="currentColor" stroke-width="1.300" stroke-linejoin="round"/><path d="M6.300 .9V3.100Q6.300 4.200 7.400 4.200H9.600" fill="none" stroke="currentColor" stroke-width="1.100"/></svg></div><div class="c c6"><span class="bdg g"><b></b><span style="letter-spacing:-0.075px">Publiable</span></span></div><div class="c c7"><svg class="dots" width="4" height="18" viewBox="0 0 4 18"><circle cx="2" cy="2.300" r="1.250"/><circle cx="2" cy="9" r="1.250"/><circle cx="2" cy="15.700" r="1.250"/></svg></div></div>
<div class="row" style="top:288px"><div class="c c0"><span class="cb on"><svg width="16" height="16" viewBox="0 0 16 16"><path d="M3.400 7.900 6.300 11.200 12.600 3.900" fill="none" stroke="#fff" stroke-width="1.650" stroke-linecap="round" stroke-linejoin="round"/></svg></span></div><div class="c c1"><span class="th"><svg class="bt" width="57" height="32" viewBox="0 0 57 32"><rect x="25.1" y="3.4" width="7.3" height="10.4" rx="1" fill="#121212"/><rect x="26" y="4" width="1.2" height="9" fill="#3a3a3a"/><path d="M24.1 16.0 Q24.1 13.4 26.5 13.4 H30.7 Q33.1 13.4 33.1 16.0 V27.0 Q33.1 28.6 31.5 28.6 H25.7 Q24.1 28.6 24.1 27.0 Z" fill="#b27b45" stroke="#8a5c2e" stroke-width=".5"/><rect x="30.8" y="15.4" width="2.200" height="12.6" rx=".8" fill="#7a4f25" opacity=".75"/><rect x="25.1" y="27.5" width="7.0" height="1" rx=".5" fill="#7a4f25" opacity=".6"/><rect x="25" y="19.2" width="6" height="1.1" fill="#3a2a1a"/><rect x="25" y="22.2" width="7" height="1.6" fill="#5a3d22" opacity=".8"/></svg></span></div><div class="c c2" style="letter-spacing:0.175px">TBL44</div><div class="c c3" style="letter-spacing:0.16px">Serum Foundation</div><div class="c c4"><span class="trk"><i style="width:80%"></i></span><span class="pc">80%</span></div><div class="c c5"><svg class="mi on m0" width="16" height="16" viewBox="0 0 16 16"><path fill="currentColor" d="M6 5.500a1.500 1.500 0 1 1-3 0 1.500 1.500 0 0 1 3 0z"/><path fill="currentColor" d="M2 2a2 2 0 0 0-2 2v8a2 2 0 0 0 2 2h12a2 2 0 0 0 2-2V4a2 2 0 0 0-2-2H2zm12 1a1 1 0 0 1 1 1v6l-3.775-1.947a.5.5 0 0 0-.577.093l-3.710 3.710-2.660-1.772a.5.5 0 0 0-.630.062L1 12V4a1 1 0 0 1 1-1h12z"/></svg><svg class="mi m1" width="16" height="18" viewBox="0 0 16 16" preserveAspectRatio="none"><path fill="currentColor" d="M6 13c0 1.105-1.120 2-2.500 2S1 14.105 1 13c0-1.104 1.120-2 2.500-2s2.500.896 2.500 2zm9-2c0 1.105-1.120 2-2.500 2s-2.500-.895-2.500-2 1.120-2 2.500-2 2.500.895 2.500 2z"/><path fill="currentColor" fill-rule="evenodd" d="M14 11V2h1v9h-1zM6 3v10H5V3h1z"/><path fill="currentColor" d="M5 2.905a1 1 0 0 1 .9-.995l8-.8a1 1 0 0 1 1.100.995V3L5 4V2.905z"/></svg><svg class="mi on m2" width="16" height="16" viewBox="0 0 16 16"><path fill="currentColor" d="M0 1a1 1 0 0 1 1-1h14a1 1 0 0 1 1 1v14a1 1 0 0 1-1 1H1a1 1 0 0 1-1-1V1zm4 0v6h8V1H4zm8 8H4v6h8V9zM1 1v2h2V1H1zm2 3H1v2h2V4zM1 7v2h2V7H1zm2 3H1v2h2v-2zm-2 3v2h2v-2H1zM15 1h-2v2h2V1zm-2 3v2h2V4h-2zm2 3h-2v2h2V7zm-2 3v2h2v-2h-2zm2 3h-2v2h2v-2z" transform="translate(0 2) scale(1 .75)"/></svg><svg class="mi m3" width="10.500" height="14.600" viewBox="0 0 10.500 14.600"><path d="M2 .7H6.500L9.800 4V12.700Q9.800 13.900 8.600 13.900H1.900Q.7 13.900 .7 12.700V1.900Q.7 .7 1.900 .7Z" fill="none" stroke="currentColor" stroke-width="1.300" stroke-linejoin="round"/><path d="M6.300 .9V3.100Q6.300 4.200 7.400 4.200H9.600" fill="none" stroke="currentColor" stroke-width="1.100"/></svg></div><div class="c c6"><span class="bdg g"><b></b><span style="letter-spacing:-0.075px">Publiable</span></span></div><div class="c c7"><svg class="dots" width="4" height="18" viewBox="0 0 4 18"><circle cx="2" cy="2.300" r="1.250"/><circle cx="2" cy="9" r="1.250"/><circle cx="2" cy="15.700" r="1.250"/></svg></div></div>
<div class="row" style="top:328px"><div class="c c0"><span class="cb"></span></div><div class="c c1"><span class="th"><svg class="bt" width="57" height="32" viewBox="0 0 57 32"><path d="M28.300 2.600 L29.300 2.600 L31.400 9.400 L29 9.900 Z" fill="#9a9a9a"/><path d="M28.400 2.600 L29 2.600 L30.300 9.600 L29.100 9.800Z" fill="#4f4f4f"/><path d="M26.6 12.6 V10.6 Q26.6 8.8 28.9 8.8 Q31.2 8.8 31.2 10.6 V12.6Z" fill="#f6f6f6" stroke="#cfcfcf" stroke-width=".4"/><path d="M24.1 15.0 Q24.1 12.4 26.5 12.4 H30.9 Q33.3 12.4 33.3 15.0 V28.0 Q33.3 29.6 31.7 29.6 H25.7 Q24.1 29.6 24.1 28.0 Z" fill="#f7f7f7" stroke="#cfcfcf" stroke-width=".5"/><rect x="31.0" y="14.4" width="2.200" height="14.6" rx=".8" fill="#bdbdbd" opacity=".75"/><rect x="25.1" y="28.5" width="7.2" height="1" rx=".5" fill="#bdbdbd" opacity=".6"/><rect x="24.9" y="15.0" width="6.5" height="13.0" fill="#fff" opacity="0.92"/><rect x="25.5" y="20.2" width="4.7" height="1.300" fill="#3d3d3d"/><rect x="25.8" y="16.6" width="2" height=".5" fill="#999"/><rect x="25.6" y="24.3" width="3.6" height=".5" fill="#b5b5b5"/><rect x="25.6" y="25.7" width="2.9" height=".5" fill="#c8c8c8"/></svg></span></div><div class="c c2" style="letter-spacing:0.175px">TBL90</div><div class="c c3" style="letter-spacing:-0.079px">Niacinamide 10% + Zinc 1%</div><div class="c c4"><span class="trk"><i style="width:70%"></i></span><span class="pc">70%</span></div><div class="c c5"><svg class="mi on m0" width="16" height="16" viewBox="0 0 16 16"><path fill="currentColor" d="M6 5.500a1.500 1.500 0 1 1-3 0 1.500 1.500 0 0 1 3 0z"/><path fill="currentColor" d="M2 2a2 2 0 0 0-2 2v8a2 2 0 0 0 2 2h12a2 2 0 0 0 2-2V4a2 2 0 0 0-2-2H2zm12 1a1 1 0 0 1 1 1v6l-3.775-1.947a.5.5 0 0 0-.577.093l-3.710 3.710-2.660-1.772a.5.5 0 0 0-.630.062L1 12V4a1 1 0 0 1 1-1h12z"/></svg><svg class="mi m1" width="16" height="18" viewBox="0 0 16 16" preserveAspectRatio="none"><path fill="currentColor" d="M6 13c0 1.105-1.120 2-2.500 2S1 14.105 1 13c0-1.104 1.120-2 2.500-2s2.500.896 2.500 2zm9-2c0 1.105-1.120 2-2.500 2s-2.500-.895-2.500-2 1.120-2 2.500-2 2.500.895 2.500 2z"/><path fill="currentColor" fill-rule="evenodd" d="M14 11V2h1v9h-1zM6 3v10H5V3h1z"/><path fill="currentColor" d="M5 2.905a1 1 0 0 1 .9-.995l8-.8a1 1 0 0 1 1.100.995V3L5 4V2.905z"/></svg><svg class="mi m2" width="16" height="16" viewBox="0 0 16 16"><path fill="currentColor" d="M0 1a1 1 0 0 1 1-1h14a1 1 0 0 1 1 1v14a1 1 0 0 1-1 1H1a1 1 0 0 1-1-1V1zm4 0v6h8V1H4zm8 8H4v6h8V9zM1 1v2h2V1H1zm2 3H1v2h2V4zM1 7v2h2V7H1zm2 3H1v2h2v-2zm-2 3v2h2v-2H1zM15 1h-2v2h2V1zm-2 3v2h2V4h-2zm2 3h-2v2h2V7zm-2 3v2h2v-2h-2zm2 3h-2v2h2v-2z" transform="translate(0 2) scale(1 .75)"/></svg><svg class="mi on m3" width="10.500" height="14.600" viewBox="0 0 10.500 14.600"><path d="M2 .7H6.500L9.800 4V12.700Q9.800 13.900 8.600 13.900H1.900Q.7 13.900 .7 12.700V1.900Q.7 .7 1.900 .7Z" fill="none" stroke="currentColor" stroke-width="1.300" stroke-linejoin="round"/><path d="M6.300 .9V3.100Q6.300 4.200 7.400 4.200H9.600" fill="none" stroke="currentColor" stroke-width="1.100"/></svg></div><div class="c c6"><span class="bdg g"><b></b><span style="letter-spacing:-0.075px">Publiable</span></span></div><div class="c c7"><svg class="dots" width="4" height="18" viewBox="0 0 4 18"><circle cx="2" cy="2.300" r="1.250"/><circle cx="2" cy="9" r="1.250"/><circle cx="2" cy="15.700" r="1.250"/></svg></div></div>
<div class="row" style="top:368px"><div class="c c0"><span class="cb on"><svg width="16" height="16" viewBox="0 0 16 16"><path d="M3.400 7.900 6.300 11.200 12.600 3.900" fill="none" stroke="#fff" stroke-width="1.650" stroke-linecap="round" stroke-linejoin="round"/></svg></span></div><div class="c c1"><span class="th"><svg class="bt" width="57" height="32" viewBox="0 0 57 32"><path d="M28.300 2.600 L29.300 2.600 L31.400 9.400 L29 9.900 Z" fill="#9a9a9a"/><path d="M28.400 2.600 L29 2.600 L30.300 9.600 L29.100 9.800Z" fill="#4f4f4f"/><path d="M26.6 12.6 V10.6 Q26.6 8.8 28.9 8.8 Q31.2 8.8 31.2 10.6 V12.6Z" fill="#f6f6f6" stroke="#cfcfcf" stroke-width=".4"/><path d="M24.1 15.0 Q24.1 12.4 26.5 12.4 H30.9 Q33.3 12.4 33.3 15.0 V28.0 Q33.3 29.6 31.7 29.6 H25.7 Q24.1 29.6 24.1 28.0 Z" fill="#f7f7f7" stroke="#cfcfcf" stroke-width=".5"/><rect x="31.0" y="14.4" width="2.200" height="14.6" rx=".8" fill="#bdbdbd" opacity=".75"/><rect x="25.1" y="28.5" width="7.2" height="1" rx=".5" fill="#bdbdbd" opacity=".6"/><rect x="24.9" y="15.0" width="6.5" height="13.0" fill="#fff" opacity="0.92"/><rect x="25.5" y="20.2" width="4.7" height="1.300" fill="#3d3d3d"/><rect x="25.8" y="16.6" width="2" height=".5" fill="#999"/><rect x="25.6" y="24.3" width="3.6" height=".5" fill="#b5b5b5"/><rect x="25.6" y="25.7" width="2.9" height=".5" fill="#c8c8c8"/></svg></span></div><div class="c c2" style="letter-spacing:0.025px">TBL23</div><div class="c c3" style="letter-spacing:0.326px">Multi-Peptide + HA Serum</div><div class="c c4"><span class="trk"><i style="width:70%"></i></span><span class="pc">70%</span></div><div class="c c5"><svg class="mi on m0" width="16" height="16" viewBox="0 0 16 16"><path fill="currentColor" d="M6 5.500a1.500 1.500 0 1 1-3 0 1.500 1.500 0 0 1 3 0z"/><path fill="currentColor" d="M2 2a2 2 0 0 0-2 2v8a2 2 0 0 0 2 2h12a2 2 0 0 0 2-2V4a2 2 0 0 0-2-2H2zm12 1a1 1 0 0 1 1 1v6l-3.775-1.947a.5.5 0 0 0-.577.093l-3.710 3.710-2.660-1.772a.5.5 0 0 0-.630.062L1 12V4a1 1 0 0 1 1-1h12z"/></svg><svg class="mi m1" width="16" height="18" viewBox="0 0 16 16" preserveAspectRatio="none"><path fill="currentColor" d="M6 13c0 1.105-1.120 2-2.500 2S1 14.105 1 13c0-1.104 1.120-2 2.500-2s2.500.896 2.500 2zm9-2c0 1.105-1.120 2-2.500 2s-2.500-.895-2.500-2 1.120-2 2.500-2 2.500.895 2.500 2z"/><path fill="currentColor" fill-rule="evenodd" d="M14 11V2h1v9h-1zM6 3v10H5V3h1z"/><path fill="currentColor" d="M5 2.905a1 1 0 0 1 .9-.995l8-.8a1 1 0 0 1 1.100.995V3L5 4V2.905z"/></svg><svg class="mi on m2" width="16" height="16" viewBox="0 0 16 16"><path fill="currentColor" d="M0 1a1 1 0 0 1 1-1h14a1 1 0 0 1 1 1v14a1 1 0 0 1-1 1H1a1 1 0 0 1-1-1V1zm4 0v6h8V1H4zm8 8H4v6h8V9zM1 1v2h2V1H1zm2 3H1v2h2V4zM1 7v2h2V7H1zm2 3H1v2h2v-2zm-2 3v2h2v-2H1zM15 1h-2v2h2V1zm-2 3v2h2V4h-2zm2 3h-2v2h2V7zm-2 3v2h2v-2h-2zm2 3h-2v2h2v-2z" transform="translate(0 2) scale(1 .75)"/></svg><svg class="mi m3" width="10.500" height="14.600" viewBox="0 0 10.500 14.600"><path d="M2 .7H6.500L9.800 4V12.700Q9.800 13.900 8.600 13.900H1.900Q.7 13.900 .7 12.700V1.900Q.7 .7 1.900 .7Z" fill="none" stroke="currentColor" stroke-width="1.300" stroke-linejoin="round"/><path d="M6.300 .9V3.100Q6.300 4.200 7.400 4.200H9.600" fill="none" stroke="currentColor" stroke-width="1.100"/></svg></div><div class="c c6"><span class="bdg g"><b></b><span style="letter-spacing:-0.075px">Publiable</span></span></div><div class="c c7"><svg class="dots" width="4" height="18" viewBox="0 0 4 18"><circle cx="2" cy="2.300" r="1.250"/><circle cx="2" cy="9" r="1.250"/><circle cx="2" cy="15.700" r="1.250"/></svg></div></div>
<div class="row" style="top:408px"><div class="c c0"><span class="cb"></span></div><div class="c c1"><span class="th"><svg class="bt" width="57" height="32" viewBox="0 0 57 32"><path d="M27.9 7.5 L28.3 3.6 Q28.7 3 29.1 3.6 L29.9 7.5Z" fill="#e9e9e9" stroke="#cfcfcf" stroke-width=".3"/><path d="M26 12.4 V9 Q26 6.6 28.9 6.6 Q31.8 6.600 31.8 9 V12.4Z" fill="#fbfbfb" stroke="#d0d0d0" stroke-width=".4"/><rect x="30.4" y="7.6" width="1.2" height="4.8" fill="#d9d9d9" opacity=".8"/><path d="M23.1 14.6 Q23.1 12.0 25.5 12.0 H31.1 Q33.5 12.0 33.5 14.6 V28.0 Q33.5 29.6 31.9 29.6 H24.7 Q23.1 29.6 23.1 28.0 Z" fill="#f3dfba" stroke="#dcc39a" stroke-width=".5"/><rect x="31.2" y="14.0" width="2.200" height="15.0" rx=".8" fill="#c9ad80" opacity=".75"/><rect x="24.1" y="28.5" width="8.4" height="1" rx=".5" fill="#c9ad80" opacity=".6"/><rect x="24.1" y="13.8" width="7.3" height="14.2" fill="#fff" opacity="0.92"/><rect x="24.7" y="19.5" width="5.3" height="1.300" fill="#3d3d3d"/><rect x="25.0" y="15.4" width="2" height=".5" fill="#999"/><rect x="24.8" y="23.6" width="4.0" height=".5" fill="#b5b5b5"/><rect x="24.8" y="25.0" width="3.3" height=".5" fill="#c8c8c8"/></svg></span></div><div class="c c2" style="letter-spacing:-0.4px">TBL81</div><div class="c c3" style="letter-spacing:-0.14px">AHA 4%</div><div class="c c4"><span class="trk"><i style="width:60%"></i></span><span class="pc">60%</span></div><div class="c c5"><svg class="mi on m0" width="16" height="16" viewBox="0 0 16 16"><path fill="currentColor" d="M6 5.500a1.500 1.500 0 1 1-3 0 1.500 1.500 0 0 1 3 0z"/><path fill="currentColor" d="M2 2a2 2 0 0 0-2 2v8a2 2 0 0 0 2 2h12a2 2 0 0 0 2-2V4a2 2 0 0 0-2-2H2zm12 1a1 1 0 0 1 1 1v6l-3.775-1.947a.5.5 0 0 0-.577.093l-3.710 3.710-2.660-1.772a.5.5 0 0 0-.630.062L1 12V4a1 1 0 0 1 1-1h12z"/></svg><svg class="mi m1" width="16" height="18" viewBox="0 0 16 16" preserveAspectRatio="none"><path fill="currentColor" d="M6 13c0 1.105-1.120 2-2.500 2S1 14.105 1 13c0-1.104 1.120-2 2.500-2s2.500.896 2.500 2zm9-2c0 1.105-1.120 2-2.500 2s-2.500-.895-2.500-2 1.120-2 2.500-2 2.500.895 2.500 2z"/><path fill="currentColor" fill-rule="evenodd" d="M14 11V2h1v9h-1zM6 3v10H5V3h1z"/><path fill="currentColor" d="M5 2.905a1 1 0 0 1 .9-.995l8-.8a1 1 0 0 1 1.100.995V3L5 4V2.905z"/></svg><svg class="mi on m2" width="16" height="16" viewBox="0 0 16 16"><path fill="currentColor" d="M0 1a1 1 0 0 1 1-1h14a1 1 0 0 1 1 1v14a1 1 0 0 1-1 1H1a1 1 0 0 1-1-1V1zm4 0v6h8V1H4zm8 8H4v6h8V9zM1 1v2h2V1H1zm2 3H1v2h2V4zM1 7v2h2V7H1zm2 3H1v2h2v-2zm-2 3v2h2v-2H1zM15 1h-2v2h2V1zm-2 3v2h2V4h-2zm2 3h-2v2h2V7zm-2 3v2h2v-2h-2zm2 3h-2v2h2v-2z" transform="translate(0 2) scale(1 .75)"/></svg><svg class="mi m3" width="10.500" height="14.600" viewBox="0 0 10.500 14.600"><path d="M2 .7H6.500L9.800 4V12.700Q9.800 13.900 8.600 13.900H1.900Q.7 13.900 .7 12.700V1.900Q.7 .7 1.900 .7Z" fill="none" stroke="currentColor" stroke-width="1.300" stroke-linejoin="round"/><path d="M6.300 .9V3.100Q6.300 4.200 7.400 4.200H9.600" fill="none" stroke="currentColor" stroke-width="1.100"/></svg></div><div class="c c6"><span class="bdg g"><b></b><span style="letter-spacing:-0.075px">Publiable</span></span></div><div class="c c7"><svg class="dots" width="4" height="18" viewBox="0 0 4 18"><circle cx="2" cy="2.300" r="1.250"/><circle cx="2" cy="9" r="1.250"/><circle cx="2" cy="15.700" r="1.250"/></svg></div></div>
<div class="row" style="top:448px"><div class="c c0"><span class="cb"></span></div><div class="c c1"><span class="th"><svg class="bt" width="57" height="32" viewBox="0 0 57 32"><path d="M27.9 7.5 L28.3 3.6 Q28.7 3 29.1 3.6 L29.9 7.5Z" fill="#e9e9e9" stroke="#cfcfcf" stroke-width=".3"/><path d="M26 12.4 V9 Q26 6.6 28.9 6.6 Q31.8 6.600 31.8 9 V12.4Z" fill="#fbfbfb" stroke="#d0d0d0" stroke-width=".4"/><rect x="30.4" y="7.6" width="1.2" height="4.8" fill="#d9d9d9" opacity=".8"/><path d="M23.1 14.6 Q23.1 12.0 25.5 12.0 H31.1 Q33.5 12.0 33.5 14.6 V28.0 Q33.5 29.6 31.9 29.6 H24.7 Q23.1 29.6 23.1 28.0 Z" fill="#f3dfba" stroke="#dcc39a" stroke-width=".5"/><rect x="31.2" y="14.0" width="2.200" height="15.0" rx=".8" fill="#c9ad80" opacity=".75"/><rect x="24.1" y="28.5" width="8.4" height="1" rx=".5" fill="#c9ad80" opacity=".6"/><rect x="24.1" y="13.8" width="7.3" height="14.2" fill="#fff" opacity="0.92"/><rect x="24.7" y="19.5" width="5.3" height="1.300" fill="#3d3d3d"/><rect x="25.0" y="15.4" width="2" height=".5" fill="#999"/><rect x="24.8" y="23.6" width="4.0" height=".5" fill="#b5b5b5"/><rect x="24.8" y="25.0" width="3.3" height=".5" fill="#c8c8c8"/></svg></span></div><div class="c c2" style="letter-spacing:0.05px">TBL82</div><div class="c c3" style="letter-spacing:0.152px">Salicylic Acid 2% Solution</div><div class="c c4"><span class="trk"><i style="width:60%"></i></span><span class="pc">60%</span></div><div class="c c5"><svg class="mi on m0" width="16" height="16" viewBox="0 0 16 16"><path fill="currentColor" d="M6 5.500a1.500 1.500 0 1 1-3 0 1.500 1.500 0 0 1 3 0z"/><path fill="currentColor" d="M2 2a2 2 0 0 0-2 2v8a2 2 0 0 0 2 2h12a2 2 0 0 0 2-2V4a2 2 0 0 0-2-2H2zm12 1a1 1 0 0 1 1 1v6l-3.775-1.947a.5.5 0 0 0-.577.093l-3.710 3.710-2.660-1.772a.5.5 0 0 0-.630.062L1 12V4a1 1 0 0 1 1-1h12z"/></svg><svg class="mi m1" width="16" height="18" viewBox="0 0 16 16" preserveAspectRatio="none"><path fill="currentColor" d="M6 13c0 1.105-1.120 2-2.500 2S1 14.105 1 13c0-1.104 1.120-2 2.500-2s2.500.896 2.500 2zm9-2c0 1.105-1.120 2-2.500 2s-2.500-.895-2.500-2 1.120-2 2.500-2 2.500.895 2.500 2z"/><path fill="currentColor" fill-rule="evenodd" d="M14 11V2h1v9h-1zM6 3v10H5V3h1z"/><path fill="currentColor" d="M5 2.905a1 1 0 0 1 .9-.995l8-.8a1 1 0 0 1 1.100.995V3L5 4V2.905z"/></svg><svg class="mi m2" width="16" height="16" viewBox="0 0 16 16"><path fill="currentColor" d="M0 1a1 1 0 0 1 1-1h14a1 1 0 0 1 1 1v14a1 1 0 0 1-1 1H1a1 1 0 0 1-1-1V1zm4 0v6h8V1H4zm8 8H4v6h8V9zM1 1v2h2V1H1zm2 3H1v2h2V4zM1 7v2h2V7H1zm2 3H1v2h2v-2zm-2 3v2h2v-2H1zM15 1h-2v2h2V1zm-2 3v2h2V4h-2zm2 3h-2v2h2V7zm-2 3v2h2v-2h-2zm2 3h-2v2h2v-2z" transform="translate(0 2) scale(1 .75)"/></svg><svg class="mi m3" width="10.500" height="14.600" viewBox="0 0 10.500 14.600"><path d="M2 .7H6.500L9.800 4V12.700Q9.800 13.900 8.600 13.900H1.900Q.7 13.900 .7 12.700V1.900Q.7 .7 1.900 .7Z" fill="none" stroke="currentColor" stroke-width="1.300" stroke-linejoin="round"/><path d="M6.300 .9V3.100Q6.300 4.200 7.400 4.200H9.600" fill="none" stroke="currentColor" stroke-width="1.100"/></svg></div><div class="c c6"><span class="bdg g"><b></b><span style="letter-spacing:-0.075px">Publiable</span></span></div><div class="c c7"><svg class="dots" width="4" height="18" viewBox="0 0 4 18"><circle cx="2" cy="2.300" r="1.250"/><circle cx="2" cy="9" r="1.250"/><circle cx="2" cy="15.700" r="1.250"/></svg></div></div>
<div class="row" style="top:488px"><div class="c c0"><span class="cb"></span></div><div class="c c1"><span class="th"><svg class="bt" width="57" height="32" viewBox="0 0 57 32"><path d="M27.9 7.5 L28.3 3.6 Q28.7 3 29.1 3.6 L29.9 7.5Z" fill="#e9e9e9" stroke="#cfcfcf" stroke-width=".3"/><path d="M26 12.4 V9 Q26 6.6 28.9 6.6 Q31.8 6.600 31.8 9 V12.4Z" fill="#fbfbfb" stroke="#d0d0d0" stroke-width=".4"/><rect x="30.4" y="7.6" width="1.2" height="4.8" fill="#d9d9d9" opacity=".8"/><rect x="26.2" y="12" width="5.4" height="3" fill="#6e3514"/><path d="M24.1 16.6 Q24.1 14.0 26.5 14.0 H30.9 Q33.3 14.0 33.3 16.6 V28.2 Q33.3 29.8 31.7 29.8 H25.7 Q24.1 29.8 24.1 28.2 Z" fill="#7c3d17" stroke="#5a2a0e" stroke-width=".5"/><rect x="31.0" y="16.0" width="2.200" height="13.2" rx=".8" fill="#3f1c08" opacity=".75"/><rect x="25.1" y="28.7" width="7.2" height="1" rx=".5" fill="#3f1c08" opacity=".6"/><rect x="24.9" y="15.8" width="6.4" height="11.8" fill="#fff" opacity="0.92"/><rect x="25.5" y="20.5" width="4.6" height="1.300" fill="#3d3d3d"/><rect x="25.8" y="17.4" width="2" height=".5" fill="#999"/><rect x="25.6" y="24.6" width="3.5" height=".5" fill="#b5b5b5"/><rect x="25.6" y="26.0" width="2.9" height=".5" fill="#c8c8c8"/></svg></span></div><div class="c c2" style="letter-spacing:-0.15px">TBL72</div><div class="c c3" style="letter-spacing:0.125px">Lactic Acid 10% Serum</div><div class="c c4"><span class="trk"><i style="width:40%"></i></span><span class="pc">40%</span></div><div class="c c5"><svg class="mi on m0" width="16" height="16" viewBox="0 0 16 16"><path fill="currentColor" d="M6 5.500a1.500 1.500 0 1 1-3 0 1.500 1.500 0 0 1 3 0z"/><path fill="currentColor" d="M2 2a2 2 0 0 0-2 2v8a2 2 0 0 0 2 2h12a2 2 0 0 0 2-2V4a2 2 0 0 0-2-2H2zm12 1a1 1 0 0 1 1 1v6l-3.775-1.947a.5.5 0 0 0-.577.093l-3.710 3.710-2.660-1.772a.5.5 0 0 0-.630.062L1 12V4a1 1 0 0 1 1-1h12z"/></svg><svg class="mi on m1" width="16" height="18" viewBox="0 0 16 16" preserveAspectRatio="none"><path fill="currentColor" d="M6 13c0 1.105-1.120 2-2.500 2S1 14.105 1 13c0-1.104 1.120-2 2.500-2s2.500.896 2.500 2zm9-2c0 1.105-1.120 2-2.500 2s-2.500-.895-2.500-2 1.120-2 2.500-2 2.500.895 2.500 2z"/><path fill="currentColor" fill-rule="evenodd" d="M14 11V2h1v9h-1zM6 3v10H5V3h1z"/><path fill="currentColor" d="M5 2.905a1 1 0 0 1 .9-.995l8-.8a1 1 0 0 1 1.100.995V3L5 4V2.905z"/></svg><svg class="mi m2" width="16" height="16" viewBox="0 0 16 16"><path fill="currentColor" d="M0 1a1 1 0 0 1 1-1h14a1 1 0 0 1 1 1v14a1 1 0 0 1-1 1H1a1 1 0 0 1-1-1V1zm4 0v6h8V1H4zm8 8H4v6h8V9zM1 1v2h2V1H1zm2 3H1v2h2V4zM1 7v2h2V7H1zm2 3H1v2h2v-2zm-2 3v2h2v-2H1zM15 1h-2v2h2V1zm-2 3v2h2V4h-2zm2 3h-2v2h2V7zm-2 3v2h2v-2h-2zm2 3h-2v2h2v-2z" transform="translate(0 2) scale(1 .75)"/></svg><svg class="mi m3" width="10.500" height="14.600" viewBox="0 0 10.500 14.600"><path d="M2 .7H6.500L9.800 4V12.700Q9.800 13.900 8.600 13.900H1.900Q.7 13.900 .7 12.700V1.900Q.7 .7 1.900 .7Z" fill="none" stroke="currentColor" stroke-width="1.300" stroke-linejoin="round"/><path d="M6.300 .9V3.100Q6.300 4.200 7.400 4.200H9.600" fill="none" stroke="currentColor" stroke-width="1.100"/></svg></div><div class="c c6"><span class="bdg o"><b></b><span style="letter-spacing:-0.075px">Non publiable</span></span></div><div class="c c7"><svg class="dots" width="4" height="18" viewBox="0 0 4 18"><circle cx="2" cy="2.300" r="1.250"/><circle cx="2" cy="9" r="1.250"/><circle cx="2" cy="15.700" r="1.250"/></svg></div></div>
<div class="row" style="top:528px"><div class="c c0"><span class="cb"></span></div><div class="c c1"><span class="th"><svg class="bt" width="57" height="32" viewBox="0 0 57 32"><path d="M28.300 2.600 L29.300 2.600 L31.400 9.400 L29 9.900 Z" fill="#9a9a9a"/><path d="M28.400 2.600 L29 2.600 L30.300 9.600 L29.100 9.800Z" fill="#4f4f4f"/><path d="M26.6 12.6 V10.6 Q26.6 8.8 28.9 8.8 Q31.2 8.8 31.2 10.6 V12.6Z" fill="#f6f6f6" stroke="#cfcfcf" stroke-width=".4"/><path d="M23.8 14.8 Q23.8 12.2 26.2 12.2 H30.8 Q33.2 12.2 33.2 14.8 V28.0 Q33.2 29.6 31.6 29.6 H25.4 Q23.8 29.6 23.8 28.0 Z" fill="#f3eed6" stroke="#d9d2b4" stroke-width=".5"/><rect x="30.9" y="14.2" width="2.200" height="14.8" rx=".8" fill="#c7bf9c" opacity=".75"/><rect x="24.8" y="28.5" width="7.4" height="1" rx=".5" fill="#c7bf9c" opacity=".6"/><rect x="24.6" y="16.0" width="6.6" height="12.0" fill="#fff" opacity="0.8"/><rect x="25.2" y="20.7" width="4.8" height="1.300" fill="#3d3d3d"/><rect x="25.5" y="17.6" width="2" height=".5" fill="#999"/><rect x="25.3" y="24.8" width="3.6" height=".5" fill="#b5b5b5"/><rect x="25.3" y="26.2" width="3.0" height=".5" fill="#c8c8c8"/></svg></span></div><div class="c c2" style="letter-spacing:0.05px">TBL52</div><div class="c c3" style="letter-spacing:0.133px">AHA/BHA Exfoliating Toner</div><div class="c c4"><span class="trk"><i style="width:30%"></i></span><span class="pc dk">30%</span></div><div class="c c5"><svg class="mi on m0" width="16" height="16" viewBox="0 0 16 16"><path fill="currentColor" d="M6 5.500a1.500 1.500 0 1 1-3 0 1.500 1.500 0 0 1 3 0z"/><path fill="currentColor" d="M2 2a2 2 0 0 0-2 2v8a2 2 0 0 0 2 2h12a2 2 0 0 0 2-2V4a2 2 0 0 0-2-2H2zm12 1a1 1 0 0 1 1 1v6l-3.775-1.947a.5.5 0 0 0-.577.093l-3.710 3.710-2.660-1.772a.5.5 0 0 0-.630.062L1 12V4a1 1 0 0 1 1-1h12z"/></svg><svg class="mi m1" width="16" height="18" viewBox="0 0 16 16" preserveAspectRatio="none"><path fill="currentColor" d="M6 13c0 1.105-1.120 2-2.500 2S1 14.105 1 13c0-1.104 1.120-2 2.500-2s2.500.896 2.500 2zm9-2c0 1.105-1.120 2-2.500 2s-2.500-.895-2.500-2 1.120-2 2.500-2 2.500.895 2.500 2z"/><path fill="currentColor" fill-rule="evenodd" d="M14 11V2h1v9h-1zM6 3v10H5V3h1z"/><path fill="currentColor" d="M5 2.905a1 1 0 0 1 .9-.995l8-.8a1 1 0 0 1 1.100.995V3L5 4V2.905z"/></svg><svg class="mi m2" width="16" height="16" viewBox="0 0 16 16"><path fill="currentColor" d="M0 1a1 1 0 0 1 1-1h14a1 1 0 0 1 1 1v14a1 1 0 0 1-1 1H1a1 1 0 0 1-1-1V1zm4 0v6h8V1H4zm8 8H4v6h8V9zM1 1v2h2V1H1zm2 3H1v2h2V4zM1 7v2h2V7H1zm2 3H1v2h2v-2zm-2 3v2h2v-2H1zM15 1h-2v2h2V1zm-2 3v2h2V4h-2zm2 3h-2v2h2V7zm-2 3v2h2v-2h-2zm2 3h-2v2h2v-2z" transform="translate(0 2) scale(1 .75)"/></svg><svg class="mi m3" width="10.500" height="14.600" viewBox="0 0 10.500 14.600"><path d="M2 .7H6.500L9.800 4V12.700Q9.800 13.900 8.600 13.900H1.900Q.7 13.900 .7 12.700V1.900Q.7 .7 1.900 .7Z" fill="none" stroke="currentColor" stroke-width="1.300" stroke-linejoin="round"/><path d="M6.300 .9V3.100Q6.300 4.200 7.400 4.200H9.600" fill="none" stroke="currentColor" stroke-width="1.100"/></svg></div><div class="c c6"><span class="bdg o"><b></b><span style="letter-spacing:-0.075px">Non publiable</span></span></div><div class="c c7"><svg class="dots" width="4" height="18" viewBox="0 0 4 18"><circle cx="2" cy="2.300" r="1.250"/><circle cx="2" cy="9" r="1.250"/><circle cx="2" cy="15.700" r="1.250"/></svg></div></div>
<div class="row" style="top:568px"><div class="c c0"><span class="cb"></span></div><div class="c c1"><span class="th"><svg class="bt" width="57" height="32" viewBox="0 0 57 32"><path d="M26.6 12.5 V6 Q26.6 3.2 28.4 3.200 Q31 3.2 31.2 6 V12.5Z" fill="#fafafa" stroke="#d2d2d2" stroke-width=".4"/><rect x="29.800" y="4.4" width="1.3" height="8" fill="#cfcfcf" opacity=".8"/><rect x="28.200" y="2.9" width="1.8" height="1.5" fill="#9a9a9a"/><path d="M24.4 14.8 Q24.4 12.2 26.8 12.2 H31.1 Q33.5 12.2 33.5 14.8 V27.8 Q33.5 29.4 31.9 29.4 H26.0 Q24.4 29.4 24.4 27.8 Z" fill="#fcfcfc" stroke="#d2d2d2" stroke-width=".5"/><rect x="31.2" y="14.2" width="2.200" height="14.6" rx=".8" fill="#b9b9b9" opacity=".75"/><rect x="25.4" y="28.3" width="7.1" height="1" rx=".5" fill="#b9b9b9" opacity=".6"/><rect x="25.0" y="14.8" width="6.6" height="13.4" fill="#fff" opacity="0.92"/><rect x="25.6" y="20.1" width="4.8" height="1.300" fill="#3d3d3d"/><rect x="25.9" y="16.4" width="2" height=".5" fill="#999"/><rect x="25.0" y="22.6" width="6.6" height=".7" fill="#9fd0ea"/><rect x="25.7" y="24.2" width="3.6" height=".5" fill="#b5b5b5"/><rect x="25.7" y="25.6" width="3.0" height=".5" fill="#c8c8c8"/></svg></span></div><div class="c c2" style="letter-spacing:0.05px">TBL62</div><div class="c c3" style="letter-spacing:0.03px">Vitamin C 15% Brightening Serum</div><div class="c c4"><span class="trk"><i style="width:30%"></i></span><span class="pc dk">30%</span></div><div class="c c5"><svg class="mi on m0" width="16" height="16" viewBox="0 0 16 16"><path fill="currentColor" d="M6 5.500a1.500 1.500 0 1 1-3 0 1.500 1.500 0 0 1 3 0z"/><path fill="currentColor" d="M2 2a2 2 0 0 0-2 2v8a2 2 0 0 0 2 2h12a2 2 0 0 0 2-2V4a2 2 0 0 0-2-2H2zm12 1a1 1 0 0 1 1 1v6l-3.775-1.947a.5.5 0 0 0-.577.093l-3.710 3.710-2.660-1.772a.5.5 0 0 0-.630.062L1 12V4a1 1 0 0 1 1-1h12z"/></svg><svg class="mi m1" width="16" height="18" viewBox="0 0 16 16" preserveAspectRatio="none"><path fill="currentColor" d="M6 13c0 1.105-1.120 2-2.500 2S1 14.105 1 13c0-1.104 1.120-2 2.500-2s2.500.896 2.500 2zm9-2c0 1.105-1.120 2-2.500 2s-2.500-.895-2.500-2 1.120-2 2.500-2 2.500.895 2.500 2z"/><path fill="currentColor" fill-rule="evenodd" d="M14 11V2h1v9h-1zM6 3v10H5V3h1z"/><path fill="currentColor" d="M5 2.905a1 1 0 0 1 .9-.995l8-.8a1 1 0 0 1 1.100.995V3L5 4V2.905z"/></svg><svg class="mi m2" width="16" height="16" viewBox="0 0 16 16"><path fill="currentColor" d="M0 1a1 1 0 0 1 1-1h14a1 1 0 0 1 1 1v14a1 1 0 0 1-1 1H1a1 1 0 0 1-1-1V1zm4 0v6h8V1H4zm8 8H4v6h8V9zM1 1v2h2V1H1zm2 3H1v2h2V4zM1 7v2h2V7H1zm2 3H1v2h2v-2zm-2 3v2h2v-2H1zM15 1h-2v2h2V1zm-2 3v2h2V4h-2zm2 3h-2v2h2V7zm-2 3v2h2v-2h-2zm2 3h-2v2h2v-2z" transform="translate(0 2) scale(1 .75)"/></svg><svg class="mi on m3" width="10.500" height="14.600" viewBox="0 0 10.500 14.600"><path d="M2 .7H6.500L9.800 4V12.700Q9.800 13.900 8.600 13.900H1.900Q.7 13.900 .7 12.700V1.900Q.7 .7 1.900 .7Z" fill="none" stroke="currentColor" stroke-width="1.300" stroke-linejoin="round"/><path d="M6.300 .9V3.100Q6.300 4.200 7.400 4.200H9.600" fill="none" stroke="currentColor" stroke-width="1.100"/></svg></div><div class="c c6"><span class="bdg o"><b></b><span style="letter-spacing:-0.075px">Non publiable</span></span></div><div class="c c7"><svg class="dots" width="4" height="18" viewBox="0 0 4 18"><circle cx="2" cy="2.300" r="1.250"/><circle cx="2" cy="9" r="1.250"/><circle cx="2" cy="15.700" r="1.250"/></svg></div></div>
<div class="row" style="top:608px"><div class="c c0"><span class="cb"></span></div><div class="c c1"><span class="th"><svg class="bt" width="57" height="32" viewBox="0 0 57 32"><path d="M26.6 12.5 V6 Q26.6 3.2 28.4 3.200 Q31 3.2 31.2 6 V12.5Z" fill="#fafafa" stroke="#d2d2d2" stroke-width=".4"/><rect x="29.800" y="4.4" width="1.3" height="8" fill="#cfcfcf" opacity=".8"/><rect x="28.200" y="2.9" width="1.8" height="1.5" fill="#9a9a9a"/><path d="M23.8 14.0 Q23.8 11.4 26.2 11.4 H32.2 Q34.6 11.4 34.6 14.0 V27.8 Q34.6 29.4 33.0 29.4 H25.4 Q23.8 29.4 23.8 27.8 Z" fill="#fcfcfc" stroke="#d2d2d2" stroke-width=".5"/><rect x="32.3" y="13.4" width="2.200" height="15.4" rx=".8" fill="#b9b9b9" opacity=".75"/><rect x="24.8" y="28.3" width="8.8" height="1" rx=".5" fill="#b9b9b9" opacity=".6"/><rect x="24.5" y="14.8" width="8.1" height="13.4" fill="#fff" opacity="0.92"/><rect x="25.1" y="20.1" width="5.8" height="1.300" fill="#3d3d3d"/><rect x="25.4" y="16.4" width="2" height=".5" fill="#999"/><rect x="24.5" y="22.6" width="8.1" height=".7" fill="#9fd0ea"/><rect x="25.2" y="24.2" width="4.5" height=".5" fill="#b5b5b5"/><rect x="25.2" y="25.6" width="3.6" height=".5" fill="#c8c8c8"/></svg></span></div><div class="c c2" style="letter-spacing:-0.2px">TBL77</div><div class="c c3" style="letter-spacing:-0.043px">Niacinamide 10% + Zinc 1% Serum</div><div class="c c4"><span class="trk"><i style="width:30%"></i></span><span class="pc dk">30%</span></div><div class="c c5"><svg class="mi on m0" width="16" height="16" viewBox="0 0 16 16"><path fill="currentColor" d="M6 5.500a1.500 1.500 0 1 1-3 0 1.500 1.500 0 0 1 3 0z"/><path fill="currentColor" d="M2 2a2 2 0 0 0-2 2v8a2 2 0 0 0 2 2h12a2 2 0 0 0 2-2V4a2 2 0 0 0-2-2H2zm12 1a1 1 0 0 1 1 1v6l-3.775-1.947a.5.5 0 0 0-.577.093l-3.710 3.710-2.660-1.772a.5.5 0 0 0-.630.062L1 12V4a1 1 0 0 1 1-1h12z"/></svg><svg class="mi m1" width="16" height="18" viewBox="0 0 16 16" preserveAspectRatio="none"><path fill="currentColor" d="M6 13c0 1.105-1.120 2-2.500 2S1 14.105 1 13c0-1.104 1.120-2 2.500-2s2.500.896 2.500 2zm9-2c0 1.105-1.120 2-2.500 2s-2.500-.895-2.500-2 1.120-2 2.500-2 2.500.895 2.500 2z"/><path fill="currentColor" fill-rule="evenodd" d="M14 11V2h1v9h-1zM6 3v10H5V3h1z"/><path fill="currentColor" d="M5 2.905a1 1 0 0 1 .9-.995l8-.8a1 1 0 0 1 1.100.995V3L5 4V2.905z"/></svg><svg class="mi on m2" width="16" height="16" viewBox="0 0 16 16"><path fill="currentColor" d="M0 1a1 1 0 0 1 1-1h14a1 1 0 0 1 1 1v14a1 1 0 0 1-1 1H1a1 1 0 0 1-1-1V1zm4 0v6h8V1H4zm8 8H4v6h8V9zM1 1v2h2V1H1zm2 3H1v2h2V4zM1 7v2h2V7H1zm2 3H1v2h2v-2zm-2 3v2h2v-2H1zM15 1h-2v2h2V1zm-2 3v2h2V4h-2zm2 3h-2v2h2V7zm-2 3v2h2v-2h-2zm2 3h-2v2h2v-2z" transform="translate(0 2) scale(1 .75)"/></svg><svg class="mi m3" width="10.500" height="14.600" viewBox="0 0 10.500 14.600"><path d="M2 .7H6.500L9.800 4V12.700Q9.800 13.900 8.600 13.900H1.900Q.7 13.900 .7 12.700V1.900Q.7 .7 1.900 .7Z" fill="none" stroke="currentColor" stroke-width="1.300" stroke-linejoin="round"/><path d="M6.300 .9V3.100Q6.300 4.200 7.400 4.200H9.600" fill="none" stroke="currentColor" stroke-width="1.100"/></svg></div><div class="c c6"><span class="bdg o"><b></b><span style="letter-spacing:-0.029px">Not publishable</span></span></div><div class="c c7"><svg class="dots" width="4" height="18" viewBox="0 0 4 18"><circle cx="2" cy="2.300" r="1.250"/><circle cx="2" cy="9" r="1.250"/><circle cx="2" cy="15.700" r="1.250"/></svg></div></div>
</div>

<!-- cursor -->
<svg class="abs" style="left:606px;top:226px;z-index:9;overflow:visible" width="40" height="48" viewBox="0 0 40 48"><defs><filter id="csh" x="-40%" y="-30%" width="180%" height="170%"><feGaussianBlur stdDeviation="1.300"/></filter></defs><path d="M11 11V34.600L16.700 29.100L21 38.200Q22.600 39.400 24.700 37.200L20.800 27.900H26.800Z" transform="translate(.4 1.600)" fill="#000" opacity=".38" stroke="#000" stroke-width="3.600" stroke-linejoin="miter" filter="url(#csh)"/><path d="M11 11V34.600L16.700 29.100L21 38.200Q22.600 39.400 24.700 37.200L20.800 27.900H26.800Z" fill="#fff" stroke="#fff" stroke-width="3.800" stroke-linejoin="miter" stroke-miterlimit="10"/><path d="M11 11V34.600L16.700 29.100L21 38.200Q22.600 39.400 24.700 37.200L20.800 27.900H26.800Z" fill="#000"/></svg>

<!-- footer -->
<div id="foot"></div>
<div class="ft" style="left:109px;color:#262626">6</div>
<div class="abs" style="left:126px;top:798.500px;width:1px;height:15px;background:#dedede"></div>
<div class="ft" style="left:134px;color:#8c8c8c;letter-spacing:0.3px">256</div>
<div class="ft" style="left:168px;color:#262626;letter-spacing:-0.04px">éléments sélectionnés</div>
<div id="act"><span style="letter-spacing:-0.035px">Choisir une action</span><svg class="abs" style="left:142px;top:12.500px" width="11" height="7" viewBox="0 0 11 7"><path d="M.8 1 5.500 5.700 10.200 1" fill="none" stroke="#8c8c8c" stroke-width="1.050" stroke-linecap="round" stroke-linejoin="round"/></svg></div>

<svg class="abs" style="left:1001px;top:800px" width="8" height="12" viewBox="0 0 8 12"><path d="M6.200 2 2.100 6l4.100 4" fill="none" stroke="#bfbfbf" stroke-width="1.150" stroke-linecap="round" stroke-linejoin="round"/></svg>
<div class="ft" style="left:1034px;color:#595959">1</div>
<div class="ft" style="left:1067.500px;color:#595959">/</div>
<div class="ft" style="left:1094.500px;color:#595959">10</div>
<svg class="abs" style="left:1130px;top:800px" width="8" height="12" viewBox="0 0 8 12"><path d="M1.800 2 5.900 6 1.800 10" fill="none" stroke="#4f4f4f" stroke-width="1.150" stroke-linecap="round" stroke-linejoin="round"/></svg>
<div id="pgsz"><span class="abs" style="left:15px;top:0;letter-spacing:0.1px">24</span><span class="abs" style="left:38px;top:8px;width:1px;height:16px;background:#d9d9d9"></span><span class="abs" style="left:45px;top:0;letter-spacing:-0.3px">Page</span><svg class="abs" style="left:91px;top:12px" width="12" height="8" viewBox="0 0 12 8"><path d="M1.200 1.500 6 6.300l4.800-4.800" fill="none" stroke="#8c8c8c" stroke-width="1.200" stroke-linecap="round" stroke-linejoin="round"/></svg></div>
<div id="refr"><svg class="abs" style="left:15px;top:10px" width="12" height="12" viewBox="0 0 12 12"><path d="M10.600 4.200A5 5 0 0 0 1.300 4.600M1.400 7.800a5 5 0 0 0 9.300-.4" fill="none" stroke="#595959" stroke-width="1.200" stroke-linecap="round"/><path d="M.8 1.600v3.200h3.200M11.200 10.400V7.200H8" fill="none" stroke="#595959" stroke-width="1.200" stroke-linecap="round" stroke-linejoin="round"/></svg><span class="abs" style="left:37px;top:0;letter-spacing:-0.033px;-webkit-text-stroke:.2px #595959">Rafraîchir</span></div>

<!-- bottom bar -->
<div id="bbar"></div>
<div class="abs" style="left:8px;top:856px;width:33px;height:1px;background:#d9d9d9"></div>
<svg class="abs" style="left:20.400px;top:867.900px;overflow:visible" width="16" height="16" viewBox="0 0 14 14"><circle cx="7" cy="7" r="6.300" fill="none" stroke="#434343" stroke-width="1.050"/><circle cx="7" cy="3.900" r=".9" fill="#434343"/><path d="M5.600 6.200H7.500V10.400M5.600 10.400H9" fill="none" stroke="#434343" stroke-width="1.100"/></svg>
<div id="burger"><svg class="abs" style="left:17px;top:15.300px" width="12" height="11" viewBox="0 0 12 11"><path d="M0 .8h11.800M0 5.400h11.800M0 10h11.800" stroke="#999" stroke-width="1.200"/></svg></div>
<div class="tab" style="left:121px;letter-spacing:-0.047px">Vitality Boos...</div>
<div class="tab" style="left:265px;letter-spacing:-0.224px">Harmonious Bala...</div>
<div class="tab" style="left:439px;letter-spacing:-0.183px">Essential Defens...</div>
<svg class="abs tbi" style="left:104px;top:870px" width="12" height="12" viewBox="0 0 12 12"><rect x=".65" y=".65" width="10.700" height="10.700" rx="1.300" fill="none" stroke="#595959" stroke-width="1.300"/><path d="M5.900 .6v10.800M5.900 5.100h5" stroke="#595959" stroke-width="1.200"/><path d="M2.300 3.200h2M2.300 5.200h2M2.300 7.200h2M7.600 3.100h2" stroke="#595959" stroke-width=".9"/></svg>
<svg class="abs tbi" style="left:248px;top:870px" width="12" height="12" viewBox="0 0 12 12"><rect x=".65" y=".65" width="10.700" height="10.700" rx="1.300" fill="none" stroke="#595959" stroke-width="1.300"/><path d="M5.900 .6v10.800M5.900 5.100h5" stroke="#595959" stroke-width="1.200"/><path d="M2.300 3.200h2M2.300 5.200h2M2.300 7.200h2M7.600 3.100h2" stroke="#595959" stroke-width=".9"/></svg>
<svg class="abs tbi" style="left:422.400px;top:870px" width="12" height="12" viewBox="0 0 12 12"><rect x=".65" y=".65" width="10.700" height="10.700" rx="1.300" fill="none" stroke="#595959" stroke-width="1.300"/><path d="M5.900 .6v10.800M5.900 5.100h5" stroke="#595959" stroke-width="1.200"/><path d="M2.300 3.200h2M2.300 5.200h2M2.300 7.200h2M7.600 3.100h2" stroke="#595959" stroke-width=".9"/></svg>
</div>
</body>
</html>
